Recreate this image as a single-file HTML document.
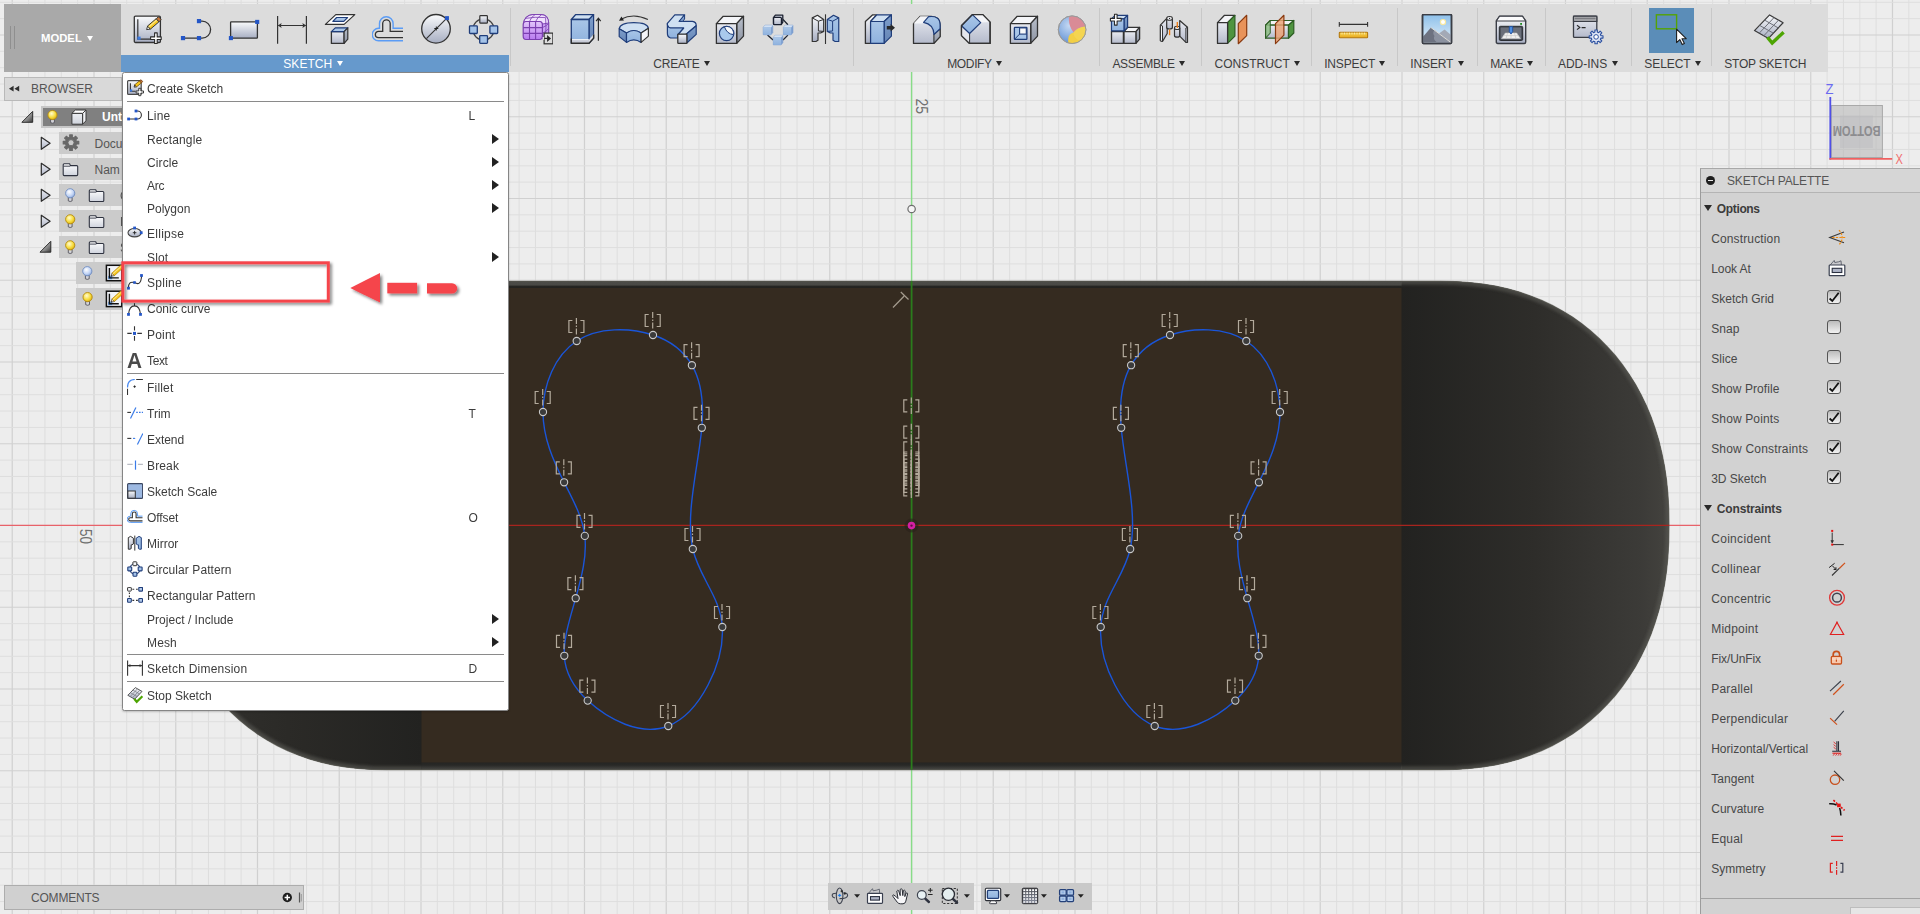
<!DOCTYPE html>
<html><head><meta charset="utf-8"><title>Fusion</title><style>
html,body{margin:0;padding:0}
body{width:1920px;height:914px;overflow:hidden;position:relative;background:#ededed;font-family:"Liberation Sans",sans-serif;font-size:12px;color:#3c3c3c}
.abs{position:absolute}
svg{display:block}
.tb{position:absolute;left:4px;top:4px;width:1824px;height:67.5px;background:#dcdcdc}
.model{position:absolute;left:0;top:0;width:117.2px;height:67.5px;background:#a9a9a9}
.model span{position:absolute;left:37px;top:28px;color:#fff;font-size:11.3px;font-weight:bold;letter-spacing:0}
.lbl{position:absolute;top:52px;height:16px;line-height:16px;font-size:12px;color:#3c3c3c;white-space:nowrap}
.lbl i{display:inline-block;width:0;height:0;border-left:3.6px solid transparent;border-right:3.6px solid transparent;border-top:5px solid #2a2a2a;margin-left:4.4px;vertical-align:1.6px}
.sep{position:absolute;top:8px;width:1px;height:58px;background:#c8c8c8}
.ico{position:absolute}
.mi{position:absolute;left:0;width:386px;height:20px}
.mi span{position:absolute;left:24px;top:1px;line-height:20px;font-size:12px;color:#3c3c3c;white-space:nowrap}
.mi b{position:absolute;font-weight:normal;top:1px;line-height:20px;font-size:12px;color:#3c3c3c}
.mi u{position:absolute;left:369px;top:5.4px;width:0;height:0;border-top:5.6px solid transparent;border-bottom:5.6px solid transparent;border-left:7px solid #222}
.mi svg{position:absolute;left:4.2px;top:2.4px}
.msep{position:absolute;left:4px;width:377px;height:1px;background:#8a8a8a}
.pl{position:absolute;left:10.2px;font-size:12px;color:#484848;line-height:16px;white-space:nowrap}
.ph{position:absolute;left:15.8px;font-size:12px;font-weight:bold;color:#3c3c3c;line-height:16px}
.cb{position:absolute;left:126.2px;width:14px;height:14px;box-sizing:border-box;border:1.2px solid #555;border-radius:3px;background:linear-gradient(#bcbcbc,#f2f2f2)}
</style></head><body>
<svg width="0" height="0" style="position:absolute"><defs>
<linearGradient id="gG" x1="0" y1="0" x2="0" y2="1"><stop offset="0" stop-color="#fafbfc"/><stop offset="1" stop-color="#a7aec2"/></linearGradient>
<linearGradient id="gG2" x1="0" y1="0" x2="0" y2="1"><stop offset="0" stop-color="#e9ebf1"/><stop offset="1" stop-color="#b4bacb"/></linearGradient>
<linearGradient id="gGs" x1="0" y1="0" x2="0" y2="1"><stop offset="0" stop-color="#b9bfca"/><stop offset="1" stop-color="#8d94a3"/></linearGradient>
<linearGradient id="gB" x1="0" y1="0" x2="0" y2="1"><stop offset="0" stop-color="#a9c6e8"/><stop offset="1" stop-color="#8fb2de"/></linearGradient>
<linearGradient id="gBs" x1="0" y1="0" x2="0" y2="1"><stop offset="0" stop-color="#7f9fcb"/><stop offset="1" stop-color="#6484b5"/></linearGradient>
<linearGradient id="gBt" x1="0" y1="0" x2="0" y2="1"><stop offset="0" stop-color="#d6e5f5"/><stop offset="1" stop-color="#c0d6ee"/></linearGradient>
<linearGradient id="gP" x1="0" y1="0" x2="0" y2="1"><stop offset="0" stop-color="#e3c6fa"/><stop offset="1" stop-color="#b87af0"/></linearGradient>
<linearGradient id="gSky" x1="0" y1="0" x2="0" y2="1"><stop offset="0" stop-color="#8dc0ea"/><stop offset="1" stop-color="#e4f0fa"/></linearGradient>
<linearGradient id="gY" x1="0" y1="0" x2="0" y2="1"><stop offset="0" stop-color="#f8d65a"/><stop offset="1" stop-color="#e8a818"/></linearGradient>
<radialGradient id="gSph" cx=".4" cy=".35" r=".7"><stop offset="0" stop-color="#c6daf4"/><stop offset="1" stop-color="#5f8fd2"/></radialGradient>
</defs></svg>
<svg width="1920" height="914" viewBox="0 0 1920 914" style="position:absolute;left:0;top:0"><defs>
<linearGradient id="gR" x1="1401" x2="1669" y1="0" y2="0" gradientUnits="userSpaceOnUse"><stop offset="0" stop-color="#222220"/><stop offset="0.5" stop-color="#2e2d2a"/><stop offset="0.9" stop-color="#3c3b38"/><stop offset="1" stop-color="#44433f"/></linearGradient>
<linearGradient id="gL" x1="422" x2="154" y1="0" y2="0" gradientUnits="userSpaceOnUse"><stop offset="0" stop-color="#222220"/><stop offset="0.5" stop-color="#2b2a27"/><stop offset="0.9" stop-color="#33322f"/><stop offset="1" stop-color="#3a3936"/></linearGradient>
<linearGradient id="gTop" x1="0" x2="0" y1="280" y2="288.2" gradientUnits="userSpaceOnUse"><stop offset="0" stop-color="#3e3e3a"/><stop offset=".2" stop-color="#4c4c48"/><stop offset=".6" stop-color="#494945"/><stop offset=".78" stop-color="#252522"/><stop offset="1" stop-color="#22221f"/></linearGradient>
<linearGradient id="gBot" x1="0" x2="0" y1="762.3" y2="770.3" gradientUnits="userSpaceOnUse"><stop offset="0" stop-color="#252523"/><stop offset=".35" stop-color="#282826"/><stop offset=".75" stop-color="#3e3e3b"/><stop offset="1" stop-color="#4e4e4a"/></linearGradient>
<clipPath id="endsclip"><rect x="100" y="270" width="321.5" height="510"/><rect x="1401" y="270" width="300" height="510"/></clipPath><filter id="rimblur" x="-5%" y="-5%" width="110%" height="110%"><feGaussianBlur stdDeviation="1.8"/></filter>
<clipPath id="bodyclip"><path d="M1440.0,281.3 L1456.0,281.6 L1469.9,282.5 L1483.0,284.0 L1495.5,286.1 L1507.7,288.8 L1519.4,292.1 L1530.7,296.0 L1541.7,300.4 L1552.3,305.4 L1562.5,311.0 L1572.4,317.1 L1581.8,323.8 L1590.8,331.0 L1599.4,338.7 L1607.5,346.9 L1615.2,355.5 L1622.4,364.7 L1629.1,374.3 L1635.4,384.3 L1641.1,394.8 L1646.4,405.7 L1651.1,417.0 L1655.2,428.7 L1658.9,440.8 L1661.9,453.4 L1664.5,466.3 L1666.5,479.7 L1667.9,493.7 L1668.7,508.4 L1669.0,525.5 L1668.7,542.6 L1667.9,557.3 L1666.5,571.3 L1664.5,584.7 L1661.9,597.6 L1658.9,610.2 L1655.2,622.3 L1651.1,634.0 L1646.4,645.3 L1641.1,656.2 L1635.4,666.7 L1629.1,676.7 L1622.4,686.3 L1615.2,695.5 L1607.5,704.1 L1599.4,712.3 L1590.8,720.0 L1581.8,727.2 L1572.4,733.9 L1562.5,740.0 L1552.3,745.6 L1541.7,750.6 L1530.7,755.0 L1519.4,758.9 L1507.7,762.2 L1495.5,764.9 L1483.0,767.0 L1469.9,768.5 L1456.0,769.4 L1440.0,769.7 L387.0,769.7 L371.4,769.4 L357.8,768.5 L345.0,767.0 L332.7,764.9 L320.8,762.2 L309.3,758.9 L298.2,755.0 L287.5,750.6 L277.1,745.6 L267.1,740.0 L257.5,733.9 L248.3,727.2 L239.5,720.0 L231.1,712.3 L223.1,704.1 L215.6,695.5 L208.6,686.3 L202.0,676.7 L195.9,666.7 L190.3,656.2 L185.1,645.3 L180.5,634.0 L176.5,622.3 L172.9,610.2 L169.9,597.6 L167.4,584.7 L165.5,571.3 L164.1,557.3 L163.3,542.6 L163.0,525.5 L163.3,508.4 L164.1,493.7 L165.5,479.7 L167.4,466.3 L169.9,453.4 L172.9,440.8 L176.5,428.7 L180.5,417.0 L185.1,405.7 L190.3,394.8 L195.9,384.3 L202.0,374.3 L208.6,364.7 L215.6,355.5 L223.1,346.9 L231.1,338.7 L239.5,331.0 L248.3,323.8 L257.5,317.1 L267.1,311.0 L277.1,305.4 L287.5,300.4 L298.2,296.0 L309.3,292.1 L320.8,288.8 L332.7,286.1 L345.0,284.0 L357.8,282.5 L371.4,281.6 L387.0,281.3Z"/></clipPath>
</defs><rect width="1920" height="914" fill="#ededed"/><line x1="12.25" y1="0" x2="12.25" y2="914" stroke="#d0d0d0" stroke-width="1.2"/>
<line x1="28.60" y1="0" x2="28.60" y2="914" stroke="#dedede" stroke-width="1"/>
<line x1="44.95" y1="0" x2="44.95" y2="914" stroke="#dedede" stroke-width="1"/>
<line x1="61.30" y1="0" x2="61.30" y2="914" stroke="#dedede" stroke-width="1"/>
<line x1="77.65" y1="0" x2="77.65" y2="914" stroke="#dedede" stroke-width="1"/>
<line x1="94.00" y1="0" x2="94.00" y2="914" stroke="#d0d0d0" stroke-width="1.2"/>
<line x1="110.35" y1="0" x2="110.35" y2="914" stroke="#dedede" stroke-width="1"/>
<line x1="126.70" y1="0" x2="126.70" y2="914" stroke="#dedede" stroke-width="1"/>
<line x1="143.05" y1="0" x2="143.05" y2="914" stroke="#dedede" stroke-width="1"/>
<line x1="159.40" y1="0" x2="159.40" y2="914" stroke="#dedede" stroke-width="1"/>
<line x1="175.75" y1="0" x2="175.75" y2="914" stroke="#d0d0d0" stroke-width="1.2"/>
<line x1="192.10" y1="0" x2="192.10" y2="914" stroke="#dedede" stroke-width="1"/>
<line x1="208.45" y1="0" x2="208.45" y2="914" stroke="#dedede" stroke-width="1"/>
<line x1="224.80" y1="0" x2="224.80" y2="914" stroke="#dedede" stroke-width="1"/>
<line x1="241.15" y1="0" x2="241.15" y2="914" stroke="#dedede" stroke-width="1"/>
<line x1="257.50" y1="0" x2="257.50" y2="914" stroke="#d0d0d0" stroke-width="1.2"/>
<line x1="273.85" y1="0" x2="273.85" y2="914" stroke="#dedede" stroke-width="1"/>
<line x1="290.20" y1="0" x2="290.20" y2="914" stroke="#dedede" stroke-width="1"/>
<line x1="306.55" y1="0" x2="306.55" y2="914" stroke="#dedede" stroke-width="1"/>
<line x1="322.90" y1="0" x2="322.90" y2="914" stroke="#dedede" stroke-width="1"/>
<line x1="339.25" y1="0" x2="339.25" y2="914" stroke="#d0d0d0" stroke-width="1.2"/>
<line x1="355.60" y1="0" x2="355.60" y2="914" stroke="#dedede" stroke-width="1"/>
<line x1="371.95" y1="0" x2="371.95" y2="914" stroke="#dedede" stroke-width="1"/>
<line x1="388.30" y1="0" x2="388.30" y2="914" stroke="#dedede" stroke-width="1"/>
<line x1="404.65" y1="0" x2="404.65" y2="914" stroke="#dedede" stroke-width="1"/>
<line x1="421.00" y1="0" x2="421.00" y2="914" stroke="#d0d0d0" stroke-width="1.2"/>
<line x1="437.35" y1="0" x2="437.35" y2="914" stroke="#dedede" stroke-width="1"/>
<line x1="453.70" y1="0" x2="453.70" y2="914" stroke="#dedede" stroke-width="1"/>
<line x1="470.05" y1="0" x2="470.05" y2="914" stroke="#dedede" stroke-width="1"/>
<line x1="486.40" y1="0" x2="486.40" y2="914" stroke="#dedede" stroke-width="1"/>
<line x1="502.75" y1="0" x2="502.75" y2="914" stroke="#d0d0d0" stroke-width="1.2"/>
<line x1="519.10" y1="0" x2="519.10" y2="914" stroke="#dedede" stroke-width="1"/>
<line x1="535.45" y1="0" x2="535.45" y2="914" stroke="#dedede" stroke-width="1"/>
<line x1="551.80" y1="0" x2="551.80" y2="914" stroke="#dedede" stroke-width="1"/>
<line x1="568.15" y1="0" x2="568.15" y2="914" stroke="#dedede" stroke-width="1"/>
<line x1="584.50" y1="0" x2="584.50" y2="914" stroke="#d0d0d0" stroke-width="1.2"/>
<line x1="600.85" y1="0" x2="600.85" y2="914" stroke="#dedede" stroke-width="1"/>
<line x1="617.20" y1="0" x2="617.20" y2="914" stroke="#dedede" stroke-width="1"/>
<line x1="633.55" y1="0" x2="633.55" y2="914" stroke="#dedede" stroke-width="1"/>
<line x1="649.90" y1="0" x2="649.90" y2="914" stroke="#dedede" stroke-width="1"/>
<line x1="666.25" y1="0" x2="666.25" y2="914" stroke="#d0d0d0" stroke-width="1.2"/>
<line x1="682.60" y1="0" x2="682.60" y2="914" stroke="#dedede" stroke-width="1"/>
<line x1="698.95" y1="0" x2="698.95" y2="914" stroke="#dedede" stroke-width="1"/>
<line x1="715.30" y1="0" x2="715.30" y2="914" stroke="#dedede" stroke-width="1"/>
<line x1="731.65" y1="0" x2="731.65" y2="914" stroke="#dedede" stroke-width="1"/>
<line x1="748.00" y1="0" x2="748.00" y2="914" stroke="#d0d0d0" stroke-width="1.2"/>
<line x1="764.35" y1="0" x2="764.35" y2="914" stroke="#dedede" stroke-width="1"/>
<line x1="780.70" y1="0" x2="780.70" y2="914" stroke="#dedede" stroke-width="1"/>
<line x1="797.05" y1="0" x2="797.05" y2="914" stroke="#dedede" stroke-width="1"/>
<line x1="813.40" y1="0" x2="813.40" y2="914" stroke="#dedede" stroke-width="1"/>
<line x1="829.75" y1="0" x2="829.75" y2="914" stroke="#d0d0d0" stroke-width="1.2"/>
<line x1="846.10" y1="0" x2="846.10" y2="914" stroke="#dedede" stroke-width="1"/>
<line x1="862.45" y1="0" x2="862.45" y2="914" stroke="#dedede" stroke-width="1"/>
<line x1="878.80" y1="0" x2="878.80" y2="914" stroke="#dedede" stroke-width="1"/>
<line x1="895.15" y1="0" x2="895.15" y2="914" stroke="#dedede" stroke-width="1"/>
<line x1="911.50" y1="0" x2="911.50" y2="914" stroke="#d0d0d0" stroke-width="1.2"/>
<line x1="927.85" y1="0" x2="927.85" y2="914" stroke="#dedede" stroke-width="1"/>
<line x1="944.20" y1="0" x2="944.20" y2="914" stroke="#dedede" stroke-width="1"/>
<line x1="960.55" y1="0" x2="960.55" y2="914" stroke="#dedede" stroke-width="1"/>
<line x1="976.90" y1="0" x2="976.90" y2="914" stroke="#dedede" stroke-width="1"/>
<line x1="993.25" y1="0" x2="993.25" y2="914" stroke="#d0d0d0" stroke-width="1.2"/>
<line x1="1009.60" y1="0" x2="1009.60" y2="914" stroke="#dedede" stroke-width="1"/>
<line x1="1025.95" y1="0" x2="1025.95" y2="914" stroke="#dedede" stroke-width="1"/>
<line x1="1042.30" y1="0" x2="1042.30" y2="914" stroke="#dedede" stroke-width="1"/>
<line x1="1058.65" y1="0" x2="1058.65" y2="914" stroke="#dedede" stroke-width="1"/>
<line x1="1075.00" y1="0" x2="1075.00" y2="914" stroke="#d0d0d0" stroke-width="1.2"/>
<line x1="1091.35" y1="0" x2="1091.35" y2="914" stroke="#dedede" stroke-width="1"/>
<line x1="1107.70" y1="0" x2="1107.70" y2="914" stroke="#dedede" stroke-width="1"/>
<line x1="1124.05" y1="0" x2="1124.05" y2="914" stroke="#dedede" stroke-width="1"/>
<line x1="1140.40" y1="0" x2="1140.40" y2="914" stroke="#dedede" stroke-width="1"/>
<line x1="1156.75" y1="0" x2="1156.75" y2="914" stroke="#d0d0d0" stroke-width="1.2"/>
<line x1="1173.10" y1="0" x2="1173.10" y2="914" stroke="#dedede" stroke-width="1"/>
<line x1="1189.45" y1="0" x2="1189.45" y2="914" stroke="#dedede" stroke-width="1"/>
<line x1="1205.80" y1="0" x2="1205.80" y2="914" stroke="#dedede" stroke-width="1"/>
<line x1="1222.15" y1="0" x2="1222.15" y2="914" stroke="#dedede" stroke-width="1"/>
<line x1="1238.50" y1="0" x2="1238.50" y2="914" stroke="#d0d0d0" stroke-width="1.2"/>
<line x1="1254.85" y1="0" x2="1254.85" y2="914" stroke="#dedede" stroke-width="1"/>
<line x1="1271.20" y1="0" x2="1271.20" y2="914" stroke="#dedede" stroke-width="1"/>
<line x1="1287.55" y1="0" x2="1287.55" y2="914" stroke="#dedede" stroke-width="1"/>
<line x1="1303.90" y1="0" x2="1303.90" y2="914" stroke="#dedede" stroke-width="1"/>
<line x1="1320.25" y1="0" x2="1320.25" y2="914" stroke="#d0d0d0" stroke-width="1.2"/>
<line x1="1336.60" y1="0" x2="1336.60" y2="914" stroke="#dedede" stroke-width="1"/>
<line x1="1352.95" y1="0" x2="1352.95" y2="914" stroke="#dedede" stroke-width="1"/>
<line x1="1369.30" y1="0" x2="1369.30" y2="914" stroke="#dedede" stroke-width="1"/>
<line x1="1385.65" y1="0" x2="1385.65" y2="914" stroke="#dedede" stroke-width="1"/>
<line x1="1402.00" y1="0" x2="1402.00" y2="914" stroke="#d0d0d0" stroke-width="1.2"/>
<line x1="1418.35" y1="0" x2="1418.35" y2="914" stroke="#dedede" stroke-width="1"/>
<line x1="1434.70" y1="0" x2="1434.70" y2="914" stroke="#dedede" stroke-width="1"/>
<line x1="1451.05" y1="0" x2="1451.05" y2="914" stroke="#dedede" stroke-width="1"/>
<line x1="1467.40" y1="0" x2="1467.40" y2="914" stroke="#dedede" stroke-width="1"/>
<line x1="1483.75" y1="0" x2="1483.75" y2="914" stroke="#d0d0d0" stroke-width="1.2"/>
<line x1="1500.10" y1="0" x2="1500.10" y2="914" stroke="#dedede" stroke-width="1"/>
<line x1="1516.45" y1="0" x2="1516.45" y2="914" stroke="#dedede" stroke-width="1"/>
<line x1="1532.80" y1="0" x2="1532.80" y2="914" stroke="#dedede" stroke-width="1"/>
<line x1="1549.15" y1="0" x2="1549.15" y2="914" stroke="#dedede" stroke-width="1"/>
<line x1="1565.50" y1="0" x2="1565.50" y2="914" stroke="#d0d0d0" stroke-width="1.2"/>
<line x1="1581.85" y1="0" x2="1581.85" y2="914" stroke="#dedede" stroke-width="1"/>
<line x1="1598.20" y1="0" x2="1598.20" y2="914" stroke="#dedede" stroke-width="1"/>
<line x1="1614.55" y1="0" x2="1614.55" y2="914" stroke="#dedede" stroke-width="1"/>
<line x1="1630.90" y1="0" x2="1630.90" y2="914" stroke="#dedede" stroke-width="1"/>
<line x1="1647.25" y1="0" x2="1647.25" y2="914" stroke="#d0d0d0" stroke-width="1.2"/>
<line x1="1663.60" y1="0" x2="1663.60" y2="914" stroke="#dedede" stroke-width="1"/>
<line x1="1679.95" y1="0" x2="1679.95" y2="914" stroke="#dedede" stroke-width="1"/>
<line x1="1696.30" y1="0" x2="1696.30" y2="914" stroke="#dedede" stroke-width="1"/>
<line x1="1712.65" y1="0" x2="1712.65" y2="914" stroke="#dedede" stroke-width="1"/>
<line x1="1729.00" y1="0" x2="1729.00" y2="914" stroke="#d0d0d0" stroke-width="1.2"/>
<line x1="1745.35" y1="0" x2="1745.35" y2="914" stroke="#dedede" stroke-width="1"/>
<line x1="1761.70" y1="0" x2="1761.70" y2="914" stroke="#dedede" stroke-width="1"/>
<line x1="1778.05" y1="0" x2="1778.05" y2="914" stroke="#dedede" stroke-width="1"/>
<line x1="1794.40" y1="0" x2="1794.40" y2="914" stroke="#dedede" stroke-width="1"/>
<line x1="1810.75" y1="0" x2="1810.75" y2="914" stroke="#d0d0d0" stroke-width="1.2"/>
<line x1="1827.10" y1="0" x2="1827.10" y2="914" stroke="#dedede" stroke-width="1"/>
<line x1="1843.45" y1="0" x2="1843.45" y2="914" stroke="#dedede" stroke-width="1"/>
<line x1="1859.80" y1="0" x2="1859.80" y2="914" stroke="#dedede" stroke-width="1"/>
<line x1="1876.15" y1="0" x2="1876.15" y2="914" stroke="#dedede" stroke-width="1"/>
<line x1="1892.50" y1="0" x2="1892.50" y2="914" stroke="#d0d0d0" stroke-width="1.2"/>
<line x1="1908.85" y1="0" x2="1908.85" y2="914" stroke="#dedede" stroke-width="1"/>
<line x1="0" y1="2.30" x2="1920" y2="2.30" stroke="#dedede" stroke-width="1"/>
<line x1="0" y1="18.65" x2="1920" y2="18.65" stroke="#dedede" stroke-width="1"/>
<line x1="0" y1="35.00" x2="1920" y2="35.00" stroke="#d0d0d0" stroke-width="1.2"/>
<line x1="0" y1="51.35" x2="1920" y2="51.35" stroke="#dedede" stroke-width="1"/>
<line x1="0" y1="67.70" x2="1920" y2="67.70" stroke="#dedede" stroke-width="1"/>
<line x1="0" y1="84.05" x2="1920" y2="84.05" stroke="#dedede" stroke-width="1"/>
<line x1="0" y1="100.40" x2="1920" y2="100.40" stroke="#dedede" stroke-width="1"/>
<line x1="0" y1="116.75" x2="1920" y2="116.75" stroke="#d0d0d0" stroke-width="1.2"/>
<line x1="0" y1="133.10" x2="1920" y2="133.10" stroke="#dedede" stroke-width="1"/>
<line x1="0" y1="149.45" x2="1920" y2="149.45" stroke="#dedede" stroke-width="1"/>
<line x1="0" y1="165.80" x2="1920" y2="165.80" stroke="#dedede" stroke-width="1"/>
<line x1="0" y1="182.15" x2="1920" y2="182.15" stroke="#dedede" stroke-width="1"/>
<line x1="0" y1="198.50" x2="1920" y2="198.50" stroke="#d0d0d0" stroke-width="1.2"/>
<line x1="0" y1="214.85" x2="1920" y2="214.85" stroke="#dedede" stroke-width="1"/>
<line x1="0" y1="231.20" x2="1920" y2="231.20" stroke="#dedede" stroke-width="1"/>
<line x1="0" y1="247.55" x2="1920" y2="247.55" stroke="#dedede" stroke-width="1"/>
<line x1="0" y1="263.90" x2="1920" y2="263.90" stroke="#dedede" stroke-width="1"/>
<line x1="0" y1="280.25" x2="1920" y2="280.25" stroke="#d0d0d0" stroke-width="1.2"/>
<line x1="0" y1="296.60" x2="1920" y2="296.60" stroke="#dedede" stroke-width="1"/>
<line x1="0" y1="312.95" x2="1920" y2="312.95" stroke="#dedede" stroke-width="1"/>
<line x1="0" y1="329.30" x2="1920" y2="329.30" stroke="#dedede" stroke-width="1"/>
<line x1="0" y1="345.65" x2="1920" y2="345.65" stroke="#dedede" stroke-width="1"/>
<line x1="0" y1="362.00" x2="1920" y2="362.00" stroke="#d0d0d0" stroke-width="1.2"/>
<line x1="0" y1="378.35" x2="1920" y2="378.35" stroke="#dedede" stroke-width="1"/>
<line x1="0" y1="394.70" x2="1920" y2="394.70" stroke="#dedede" stroke-width="1"/>
<line x1="0" y1="411.05" x2="1920" y2="411.05" stroke="#dedede" stroke-width="1"/>
<line x1="0" y1="427.40" x2="1920" y2="427.40" stroke="#dedede" stroke-width="1"/>
<line x1="0" y1="443.75" x2="1920" y2="443.75" stroke="#d0d0d0" stroke-width="1.2"/>
<line x1="0" y1="460.10" x2="1920" y2="460.10" stroke="#dedede" stroke-width="1"/>
<line x1="0" y1="476.45" x2="1920" y2="476.45" stroke="#dedede" stroke-width="1"/>
<line x1="0" y1="492.80" x2="1920" y2="492.80" stroke="#dedede" stroke-width="1"/>
<line x1="0" y1="509.15" x2="1920" y2="509.15" stroke="#dedede" stroke-width="1"/>
<line x1="0" y1="525.50" x2="1920" y2="525.50" stroke="#d0d0d0" stroke-width="1.2"/>
<line x1="0" y1="541.85" x2="1920" y2="541.85" stroke="#dedede" stroke-width="1"/>
<line x1="0" y1="558.20" x2="1920" y2="558.20" stroke="#dedede" stroke-width="1"/>
<line x1="0" y1="574.55" x2="1920" y2="574.55" stroke="#dedede" stroke-width="1"/>
<line x1="0" y1="590.90" x2="1920" y2="590.90" stroke="#dedede" stroke-width="1"/>
<line x1="0" y1="607.25" x2="1920" y2="607.25" stroke="#d0d0d0" stroke-width="1.2"/>
<line x1="0" y1="623.60" x2="1920" y2="623.60" stroke="#dedede" stroke-width="1"/>
<line x1="0" y1="639.95" x2="1920" y2="639.95" stroke="#dedede" stroke-width="1"/>
<line x1="0" y1="656.30" x2="1920" y2="656.30" stroke="#dedede" stroke-width="1"/>
<line x1="0" y1="672.65" x2="1920" y2="672.65" stroke="#dedede" stroke-width="1"/>
<line x1="0" y1="689.00" x2="1920" y2="689.00" stroke="#d0d0d0" stroke-width="1.2"/>
<line x1="0" y1="705.35" x2="1920" y2="705.35" stroke="#dedede" stroke-width="1"/>
<line x1="0" y1="721.70" x2="1920" y2="721.70" stroke="#dedede" stroke-width="1"/>
<line x1="0" y1="738.05" x2="1920" y2="738.05" stroke="#dedede" stroke-width="1"/>
<line x1="0" y1="754.40" x2="1920" y2="754.40" stroke="#dedede" stroke-width="1"/>
<line x1="0" y1="770.75" x2="1920" y2="770.75" stroke="#d0d0d0" stroke-width="1.2"/>
<line x1="0" y1="787.10" x2="1920" y2="787.10" stroke="#dedede" stroke-width="1"/>
<line x1="0" y1="803.45" x2="1920" y2="803.45" stroke="#dedede" stroke-width="1"/>
<line x1="0" y1="819.80" x2="1920" y2="819.80" stroke="#dedede" stroke-width="1"/>
<line x1="0" y1="836.15" x2="1920" y2="836.15" stroke="#dedede" stroke-width="1"/>
<line x1="0" y1="852.50" x2="1920" y2="852.50" stroke="#d0d0d0" stroke-width="1.2"/>
<line x1="0" y1="868.85" x2="1920" y2="868.85" stroke="#dedede" stroke-width="1"/>
<line x1="0" y1="885.20" x2="1920" y2="885.20" stroke="#dedede" stroke-width="1"/>
<line x1="0" y1="901.55" x2="1920" y2="901.55" stroke="#dedede" stroke-width="1"/><line x1="911.6" y1="0" x2="911.6" y2="914" stroke="#88dc88" stroke-width="1.4"/><line x1="0" y1="525.4" x2="1920" y2="525.4" stroke="#e8626a" stroke-width="1.25"/><circle cx="911.6" cy="209" r="3.7" fill="#f6f6f6" stroke="#6e6e6e" stroke-width="1.2"/><path d="M1440.0,281.3 L1456.0,281.6 L1469.9,282.5 L1483.0,284.0 L1495.5,286.1 L1507.7,288.8 L1519.4,292.1 L1530.7,296.0 L1541.7,300.4 L1552.3,305.4 L1562.5,311.0 L1572.4,317.1 L1581.8,323.8 L1590.8,331.0 L1599.4,338.7 L1607.5,346.9 L1615.2,355.5 L1622.4,364.7 L1629.1,374.3 L1635.4,384.3 L1641.1,394.8 L1646.4,405.7 L1651.1,417.0 L1655.2,428.7 L1658.9,440.8 L1661.9,453.4 L1664.5,466.3 L1666.5,479.7 L1667.9,493.7 L1668.7,508.4 L1669.0,525.5 L1668.7,542.6 L1667.9,557.3 L1666.5,571.3 L1664.5,584.7 L1661.9,597.6 L1658.9,610.2 L1655.2,622.3 L1651.1,634.0 L1646.4,645.3 L1641.1,656.2 L1635.4,666.7 L1629.1,676.7 L1622.4,686.3 L1615.2,695.5 L1607.5,704.1 L1599.4,712.3 L1590.8,720.0 L1581.8,727.2 L1572.4,733.9 L1562.5,740.0 L1552.3,745.6 L1541.7,750.6 L1530.7,755.0 L1519.4,758.9 L1507.7,762.2 L1495.5,764.9 L1483.0,767.0 L1469.9,768.5 L1456.0,769.4 L1440.0,769.7 L387.0,769.7 L371.4,769.4 L357.8,768.5 L345.0,767.0 L332.7,764.9 L320.8,762.2 L309.3,758.9 L298.2,755.0 L287.5,750.6 L277.1,745.6 L267.1,740.0 L257.5,733.9 L248.3,727.2 L239.5,720.0 L231.1,712.3 L223.1,704.1 L215.6,695.5 L208.6,686.3 L202.0,676.7 L195.9,666.7 L190.3,656.2 L185.1,645.3 L180.5,634.0 L176.5,622.3 L172.9,610.2 L169.9,597.6 L167.4,584.7 L165.5,571.3 L164.1,557.3 L163.3,542.6 L163.0,525.5 L163.3,508.4 L164.1,493.7 L165.5,479.7 L167.4,466.3 L169.9,453.4 L172.9,440.8 L176.5,428.7 L180.5,417.0 L185.1,405.7 L190.3,394.8 L195.9,384.3 L202.0,374.3 L208.6,364.7 L215.6,355.5 L223.1,346.9 L231.1,338.7 L239.5,331.0 L248.3,323.8 L257.5,317.1 L267.1,311.0 L277.1,305.4 L287.5,300.4 L298.2,296.0 L309.3,292.1 L320.8,288.8 L332.7,286.1 L345.0,284.0 L357.8,282.5 L371.4,281.6 L387.0,281.3Z" fill="#4a4a46"/><g clip-path="url(#bodyclip)"><rect x="1401" y="270" width="280" height="520" fill="url(#gR)"/><rect x="140" y="270" width="282" height="520" fill="url(#gL)"/><rect x="421.5" y="281" width="980" height="489" fill="#22221f"/><rect x="421.5" y="280" width="980" height="8.2" fill="url(#gTop)"/><rect x="421.5" y="762.3" width="980" height="8" fill="url(#gBot)"/><rect x="421.5" y="288" width="980" height="474.5" fill="#352b20"/></g><g clip-path="url(#bodyclip)"><g clip-path="url(#endsclip)"><path d="M1440.0,281.3 L1456.0,281.6 L1469.9,282.5 L1483.0,284.0 L1495.5,286.1 L1507.7,288.8 L1519.4,292.1 L1530.7,296.0 L1541.7,300.4 L1552.3,305.4 L1562.5,311.0 L1572.4,317.1 L1581.8,323.8 L1590.8,331.0 L1599.4,338.7 L1607.5,346.9 L1615.2,355.5 L1622.4,364.7 L1629.1,374.3 L1635.4,384.3 L1641.1,394.8 L1646.4,405.7 L1651.1,417.0 L1655.2,428.7 L1658.9,440.8 L1661.9,453.4 L1664.5,466.3 L1666.5,479.7 L1667.9,493.7 L1668.7,508.4 L1669.0,525.5 L1668.7,542.6 L1667.9,557.3 L1666.5,571.3 L1664.5,584.7 L1661.9,597.6 L1658.9,610.2 L1655.2,622.3 L1651.1,634.0 L1646.4,645.3 L1641.1,656.2 L1635.4,666.7 L1629.1,676.7 L1622.4,686.3 L1615.2,695.5 L1607.5,704.1 L1599.4,712.3 L1590.8,720.0 L1581.8,727.2 L1572.4,733.9 L1562.5,740.0 L1552.3,745.6 L1541.7,750.6 L1530.7,755.0 L1519.4,758.9 L1507.7,762.2 L1495.5,764.9 L1483.0,767.0 L1469.9,768.5 L1456.0,769.4 L1440.0,769.7 L387.0,769.7 L371.4,769.4 L357.8,768.5 L345.0,767.0 L332.7,764.9 L320.8,762.2 L309.3,758.9 L298.2,755.0 L287.5,750.6 L277.1,745.6 L267.1,740.0 L257.5,733.9 L248.3,727.2 L239.5,720.0 L231.1,712.3 L223.1,704.1 L215.6,695.5 L208.6,686.3 L202.0,676.7 L195.9,666.7 L190.3,656.2 L185.1,645.3 L180.5,634.0 L176.5,622.3 L172.9,610.2 L169.9,597.6 L167.4,584.7 L165.5,571.3 L164.1,557.3 L163.3,542.6 L163.0,525.5 L163.3,508.4 L164.1,493.7 L165.5,479.7 L167.4,466.3 L169.9,453.4 L172.9,440.8 L176.5,428.7 L180.5,417.0 L185.1,405.7 L190.3,394.8 L195.9,384.3 L202.0,374.3 L208.6,364.7 L215.6,355.5 L223.1,346.9 L231.1,338.7 L239.5,331.0 L248.3,323.8 L257.5,317.1 L267.1,311.0 L277.1,305.4 L287.5,300.4 L298.2,296.0 L309.3,292.1 L320.8,288.8 L332.7,286.1 L345.0,284.0 L357.8,282.5 L371.4,281.6 L387.0,281.3Z" fill="none" stroke="#5a5a55" stroke-width="7" opacity=".6" filter="url(#rimblur)"/></g></g><path d="M1440.0,281.3 L1456.0,281.6 L1469.9,282.5 L1483.0,284.0 L1495.5,286.1 L1507.7,288.8 L1519.4,292.1 L1530.7,296.0 L1541.7,300.4 L1552.3,305.4 L1562.5,311.0 L1572.4,317.1 L1581.8,323.8 L1590.8,331.0 L1599.4,338.7 L1607.5,346.9 L1615.2,355.5 L1622.4,364.7 L1629.1,374.3 L1635.4,384.3 L1641.1,394.8 L1646.4,405.7 L1651.1,417.0 L1655.2,428.7 L1658.9,440.8 L1661.9,453.4 L1664.5,466.3 L1666.5,479.7 L1667.9,493.7 L1668.7,508.4 L1669.0,525.5 L1668.7,542.6 L1667.9,557.3 L1666.5,571.3 L1664.5,584.7 L1661.9,597.6 L1658.9,610.2 L1655.2,622.3 L1651.1,634.0 L1646.4,645.3 L1641.1,656.2 L1635.4,666.7 L1629.1,676.7 L1622.4,686.3 L1615.2,695.5 L1607.5,704.1 L1599.4,712.3 L1590.8,720.0 L1581.8,727.2 L1572.4,733.9 L1562.5,740.0 L1552.3,745.6 L1541.7,750.6 L1530.7,755.0 L1519.4,758.9 L1507.7,762.2 L1495.5,764.9 L1483.0,767.0 L1469.9,768.5 L1456.0,769.4 L1440.0,769.7 L387.0,769.7 L371.4,769.4 L357.8,768.5 L345.0,767.0 L332.7,764.9 L320.8,762.2 L309.3,758.9 L298.2,755.0 L287.5,750.6 L277.1,745.6 L267.1,740.0 L257.5,733.9 L248.3,727.2 L239.5,720.0 L231.1,712.3 L223.1,704.1 L215.6,695.5 L208.6,686.3 L202.0,676.7 L195.9,666.7 L190.3,656.2 L185.1,645.3 L180.5,634.0 L176.5,622.3 L172.9,610.2 L169.9,597.6 L167.4,584.7 L165.5,571.3 L164.1,557.3 L163.3,542.6 L163.0,525.5 L163.3,508.4 L164.1,493.7 L165.5,479.7 L167.4,466.3 L169.9,453.4 L172.9,440.8 L176.5,428.7 L180.5,417.0 L185.1,405.7 L190.3,394.8 L195.9,384.3 L202.0,374.3 L208.6,364.7 L215.6,355.5 L223.1,346.9 L231.1,338.7 L239.5,331.0 L248.3,323.8 L257.5,317.1 L267.1,311.0 L277.1,305.4 L287.5,300.4 L298.2,296.0 L309.3,292.1 L320.8,288.8 L332.7,286.1 L345.0,284.0 L357.8,282.5 L371.4,281.6 L387.0,281.3Z" fill="none" stroke="#55554f" stroke-width="1.2" opacity=".7"/><g clip-path="url(#bodyclip)"><line x1="911.6" y1="270" x2="911.6" y2="780" stroke="#2a7c1c" stroke-width="1.8"/><line x1="140" y1="525.4" x2="1680" y2="525.4" stroke="#a8241e" stroke-width="1.1"/></g><g stroke="#a59c8f" stroke-width="1.2" fill="none"><path d="M893,307.5 L904.2,296"/><path d="M900.8,292 L908.5,299.5"/></g><path d="M543.0,412.0 C543.1,385.1 554.7,355.4 576.7,341.0 C598.4,326.8 630.2,327.5 653.0,335.0 C671.3,341.0 683.9,351.4 691.9,365.2 C701.0,380.9 704.1,401.1 701.8,427.8 C698.6,464.8 685.0,514.2 692.8,549.0 C699.3,577.8 720.5,596.6 722.3,627.0 C724.4,662.4 700.1,713.4 668.3,726.0 C640.7,736.9 607.5,718.9 587.7,700.6 C572.4,686.4 565.2,672.1 564.3,655.8 C563.4,638.3 569.9,618.6 575.7,598.2 C581.7,577.1 587.1,555.4 584.8,535.9 C582.6,517.3 573.4,500.8 564.1,482.3 C553.6,461.4 542.9,438.0 543.0,412.0Z" fill="none" stroke="#1a55d8" stroke-width="1.4"/><path d="M1280.0,412.0 C1279.9,385.1 1268.3,355.4 1246.3,341.0 C1224.6,326.8 1192.8,327.5 1170.0,335.0 C1151.7,341.0 1139.1,351.4 1131.1,365.2 C1122.0,380.9 1118.9,401.1 1121.2,427.8 C1124.4,464.8 1138.0,514.2 1130.2,549.0 C1123.7,577.8 1102.5,596.6 1100.7,627.0 C1098.6,662.4 1122.9,713.4 1154.7,726.0 C1182.3,736.9 1215.5,718.9 1235.3,700.6 C1250.6,686.4 1257.8,672.1 1258.7,655.8 C1259.6,638.3 1253.1,618.6 1247.3,598.2 C1241.3,577.1 1235.9,555.4 1238.2,535.9 C1240.4,517.3 1249.6,500.8 1258.9,482.3 C1269.4,461.4 1280.1,438.0 1280.0,412.0Z" fill="none" stroke="#1a55d8" stroke-width="1.4"/><g fill="none" stroke="#b3aa9c" stroke-width="1.2"><path d="M538.7,391.5 H535.2 V403.5 H538.7"/><path d="M546.7,391.5 H550.2 V403.5 H546.7"/><path d="M542.7,389.0 V406.0" stroke-dasharray="6 1.5 1.5 1.5"/></g><circle cx="543.0" cy="412.0" r="3.6" fill="#3b3b3b" stroke="#c9c9c9" stroke-width="1.1"/><g fill="none" stroke="#b3aa9c" stroke-width="1.2"><path d="M572.4,320.5 H568.9 V332.5 H572.4"/><path d="M580.4,320.5 H583.9 V332.5 H580.4"/><path d="M576.4,318.0 V335.0" stroke-dasharray="6 1.5 1.5 1.5"/></g><circle cx="576.7" cy="341.0" r="3.6" fill="#3b3b3b" stroke="#c9c9c9" stroke-width="1.1"/><g fill="none" stroke="#b3aa9c" stroke-width="1.2"><path d="M648.7,314.5 H645.2 V326.5 H648.7"/><path d="M656.7,314.5 H660.2 V326.5 H656.7"/><path d="M652.7,312.0 V329.0" stroke-dasharray="6 1.5 1.5 1.5"/></g><circle cx="653.0" cy="335.0" r="3.6" fill="#3b3b3b" stroke="#c9c9c9" stroke-width="1.1"/><g fill="none" stroke="#b3aa9c" stroke-width="1.2"><path d="M687.6,344.7 H684.1 V356.7 H687.6"/><path d="M695.6,344.7 H699.1 V356.7 H695.6"/><path d="M691.6,342.2 V359.2" stroke-dasharray="6 1.5 1.5 1.5"/></g><circle cx="691.9" cy="365.2" r="3.6" fill="#3b3b3b" stroke="#c9c9c9" stroke-width="1.1"/><g fill="none" stroke="#b3aa9c" stroke-width="1.2"><path d="M697.5,407.3 H694.0 V419.3 H697.5"/><path d="M705.5,407.3 H709.0 V419.3 H705.5"/><path d="M701.5,404.8 V421.8" stroke-dasharray="6 1.5 1.5 1.5"/></g><circle cx="701.8" cy="427.8" r="3.6" fill="#3b3b3b" stroke="#c9c9c9" stroke-width="1.1"/><g fill="none" stroke="#b3aa9c" stroke-width="1.2"><path d="M688.5,528.5 H685.0 V540.5 H688.5"/><path d="M696.5,528.5 H700.0 V540.5 H696.5"/><path d="M692.5,526.0 V543.0" stroke-dasharray="6 1.5 1.5 1.5"/></g><circle cx="692.8" cy="549.0" r="3.6" fill="#3b3b3b" stroke="#c9c9c9" stroke-width="1.1"/><g fill="none" stroke="#b3aa9c" stroke-width="1.2"><path d="M718.0,606.5 H714.5 V618.5 H718.0"/><path d="M726.0,606.5 H729.5 V618.5 H726.0"/><path d="M722.0,604.0 V621.0" stroke-dasharray="6 1.5 1.5 1.5"/></g><circle cx="722.3" cy="627.0" r="3.6" fill="#3b3b3b" stroke="#c9c9c9" stroke-width="1.1"/><g fill="none" stroke="#b3aa9c" stroke-width="1.2"><path d="M664.0,705.5 H660.5 V717.5 H664.0"/><path d="M672.0,705.5 H675.5 V717.5 H672.0"/><path d="M668.0,703.0 V720.0" stroke-dasharray="6 1.5 1.5 1.5"/></g><circle cx="668.3" cy="726.0" r="3.6" fill="#3b3b3b" stroke="#c9c9c9" stroke-width="1.1"/><g fill="none" stroke="#b3aa9c" stroke-width="1.2"><path d="M583.4,680.1 H579.9 V692.1 H583.4"/><path d="M591.4,680.1 H594.9 V692.1 H591.4"/><path d="M587.4,677.6 V694.6" stroke-dasharray="6 1.5 1.5 1.5"/></g><circle cx="587.7" cy="700.6" r="3.6" fill="#3b3b3b" stroke="#c9c9c9" stroke-width="1.1"/><g fill="none" stroke="#b3aa9c" stroke-width="1.2"><path d="M560.0,635.3 H556.5 V647.3 H560.0"/><path d="M568.0,635.3 H571.5 V647.3 H568.0"/><path d="M564.0,632.8 V649.8" stroke-dasharray="6 1.5 1.5 1.5"/></g><circle cx="564.3" cy="655.8" r="3.6" fill="#3b3b3b" stroke="#c9c9c9" stroke-width="1.1"/><g fill="none" stroke="#b3aa9c" stroke-width="1.2"><path d="M571.4,577.7 H567.9 V589.7 H571.4"/><path d="M579.4,577.7 H582.9 V589.7 H579.4"/><path d="M575.4,575.2 V592.2" stroke-dasharray="6 1.5 1.5 1.5"/></g><circle cx="575.7" cy="598.2" r="3.6" fill="#3b3b3b" stroke="#c9c9c9" stroke-width="1.1"/><g fill="none" stroke="#b3aa9c" stroke-width="1.2"><path d="M580.5,515.4 H577.0 V527.4 H580.5"/><path d="M588.5,515.4 H592.0 V527.4 H588.5"/><path d="M584.5,512.9 V529.9" stroke-dasharray="6 1.5 1.5 1.5"/></g><circle cx="584.8" cy="535.9" r="3.6" fill="#3b3b3b" stroke="#c9c9c9" stroke-width="1.1"/><g fill="none" stroke="#b3aa9c" stroke-width="1.2"><path d="M559.8,461.8 H556.3 V473.8 H559.8"/><path d="M567.8,461.8 H571.3 V473.8 H567.8"/><path d="M563.8,459.3 V476.3" stroke-dasharray="6 1.5 1.5 1.5"/></g><circle cx="564.1" cy="482.3" r="3.6" fill="#3b3b3b" stroke="#c9c9c9" stroke-width="1.1"/><g fill="none" stroke="#b3aa9c" stroke-width="1.2"><path d="M1275.7,391.5 H1272.2 V403.5 H1275.7"/><path d="M1283.7,391.5 H1287.2 V403.5 H1283.7"/><path d="M1279.7,389.0 V406.0" stroke-dasharray="6 1.5 1.5 1.5"/></g><circle cx="1280.0" cy="412.0" r="3.6" fill="#3b3b3b" stroke="#c9c9c9" stroke-width="1.1"/><g fill="none" stroke="#b3aa9c" stroke-width="1.2"><path d="M1242.0,320.5 H1238.5 V332.5 H1242.0"/><path d="M1250.0,320.5 H1253.5 V332.5 H1250.0"/><path d="M1246.0,318.0 V335.0" stroke-dasharray="6 1.5 1.5 1.5"/></g><circle cx="1246.3" cy="341.0" r="3.6" fill="#3b3b3b" stroke="#c9c9c9" stroke-width="1.1"/><g fill="none" stroke="#b3aa9c" stroke-width="1.2"><path d="M1165.7,314.5 H1162.2 V326.5 H1165.7"/><path d="M1173.7,314.5 H1177.2 V326.5 H1173.7"/><path d="M1169.7,312.0 V329.0" stroke-dasharray="6 1.5 1.5 1.5"/></g><circle cx="1170.0" cy="335.0" r="3.6" fill="#3b3b3b" stroke="#c9c9c9" stroke-width="1.1"/><g fill="none" stroke="#b3aa9c" stroke-width="1.2"><path d="M1126.8,344.7 H1123.3 V356.7 H1126.8"/><path d="M1134.8,344.7 H1138.3 V356.7 H1134.8"/><path d="M1130.8,342.2 V359.2" stroke-dasharray="6 1.5 1.5 1.5"/></g><circle cx="1131.1" cy="365.2" r="3.6" fill="#3b3b3b" stroke="#c9c9c9" stroke-width="1.1"/><g fill="none" stroke="#b3aa9c" stroke-width="1.2"><path d="M1116.9,407.3 H1113.4 V419.3 H1116.9"/><path d="M1124.9,407.3 H1128.4 V419.3 H1124.9"/><path d="M1120.9,404.8 V421.8" stroke-dasharray="6 1.5 1.5 1.5"/></g><circle cx="1121.2" cy="427.8" r="3.6" fill="#3b3b3b" stroke="#c9c9c9" stroke-width="1.1"/><g fill="none" stroke="#b3aa9c" stroke-width="1.2"><path d="M1125.9,528.5 H1122.4 V540.5 H1125.9"/><path d="M1133.9,528.5 H1137.4 V540.5 H1133.9"/><path d="M1129.9,526.0 V543.0" stroke-dasharray="6 1.5 1.5 1.5"/></g><circle cx="1130.2" cy="549.0" r="3.6" fill="#3b3b3b" stroke="#c9c9c9" stroke-width="1.1"/><g fill="none" stroke="#b3aa9c" stroke-width="1.2"><path d="M1096.4,606.5 H1092.9 V618.5 H1096.4"/><path d="M1104.4,606.5 H1107.9 V618.5 H1104.4"/><path d="M1100.4,604.0 V621.0" stroke-dasharray="6 1.5 1.5 1.5"/></g><circle cx="1100.7" cy="627.0" r="3.6" fill="#3b3b3b" stroke="#c9c9c9" stroke-width="1.1"/><g fill="none" stroke="#b3aa9c" stroke-width="1.2"><path d="M1150.4,705.5 H1146.9 V717.5 H1150.4"/><path d="M1158.4,705.5 H1161.9 V717.5 H1158.4"/><path d="M1154.4,703.0 V720.0" stroke-dasharray="6 1.5 1.5 1.5"/></g><circle cx="1154.7" cy="726.0" r="3.6" fill="#3b3b3b" stroke="#c9c9c9" stroke-width="1.1"/><g fill="none" stroke="#b3aa9c" stroke-width="1.2"><path d="M1231.0,680.1 H1227.5 V692.1 H1231.0"/><path d="M1239.0,680.1 H1242.5 V692.1 H1239.0"/><path d="M1235.0,677.6 V694.6" stroke-dasharray="6 1.5 1.5 1.5"/></g><circle cx="1235.3" cy="700.6" r="3.6" fill="#3b3b3b" stroke="#c9c9c9" stroke-width="1.1"/><g fill="none" stroke="#b3aa9c" stroke-width="1.2"><path d="M1254.4,635.3 H1250.9 V647.3 H1254.4"/><path d="M1262.4,635.3 H1265.9 V647.3 H1262.4"/><path d="M1258.4,632.8 V649.8" stroke-dasharray="6 1.5 1.5 1.5"/></g><circle cx="1258.7" cy="655.8" r="3.6" fill="#3b3b3b" stroke="#c9c9c9" stroke-width="1.1"/><g fill="none" stroke="#b3aa9c" stroke-width="1.2"><path d="M1243.0,577.7 H1239.5 V589.7 H1243.0"/><path d="M1251.0,577.7 H1254.5 V589.7 H1251.0"/><path d="M1247.0,575.2 V592.2" stroke-dasharray="6 1.5 1.5 1.5"/></g><circle cx="1247.3" cy="598.2" r="3.6" fill="#3b3b3b" stroke="#c9c9c9" stroke-width="1.1"/><g fill="none" stroke="#b3aa9c" stroke-width="1.2"><path d="M1233.9,515.4 H1230.4 V527.4 H1233.9"/><path d="M1241.9,515.4 H1245.4 V527.4 H1241.9"/><path d="M1237.9,512.9 V529.9" stroke-dasharray="6 1.5 1.5 1.5"/></g><circle cx="1238.2" cy="535.9" r="3.6" fill="#3b3b3b" stroke="#c9c9c9" stroke-width="1.1"/><g fill="none" stroke="#b3aa9c" stroke-width="1.2"><path d="M1254.6,461.8 H1251.1 V473.8 H1254.6"/><path d="M1262.6,461.8 H1266.1 V473.8 H1262.6"/><path d="M1258.6,459.3 V476.3" stroke-dasharray="6 1.5 1.5 1.5"/></g><circle cx="1258.9" cy="482.3" r="3.6" fill="#3b3b3b" stroke="#c9c9c9" stroke-width="1.1"/><g fill="none" stroke="#b3aa9c" stroke-width="1.2"><path d="M907.3,399.9 H903.8 V411.9 H907.3"/><path d="M915.3,399.9 H918.8 V411.9 H915.3"/><path d="M911.3,397.4 V414.4" stroke-dasharray="6 1.5 1.5 1.5"/></g><g fill="none" stroke="#b3aa9c" stroke-width="1.2"><path d="M907.3,426.2 H903.8 V438.2 H907.3"/><path d="M915.3,426.2 H918.8 V438.2 H915.3"/><path d="M911.3,423.7 V440.7" stroke-dasharray="6 1.5 1.5 1.5"/></g><g fill="none" stroke="#b3aa9c" stroke-width="1.2"><path d="M907.3,441.8 H903.8 V453.8 H907.3"/><path d="M915.3,441.8 H918.8 V453.8 H915.3"/><path d="M911.3,439.3 V456.3" stroke-dasharray="6 1.5 1.5 1.5"/></g><g fill="none" stroke="#b3aa9c" stroke-width="1.2"><path d="M907.3,452.0 H903.8 V464.0 H907.3"/><path d="M915.3,452.0 H918.8 V464.0 H915.3"/><path d="M911.3,449.5 V466.5" stroke-dasharray="6 1.5 1.5 1.5"/></g><g fill="none" stroke="#b3aa9c" stroke-width="1.2"><path d="M907.3,455.6 H903.8 V467.6 H907.3"/><path d="M915.3,455.6 H918.8 V467.6 H915.3"/><path d="M911.3,453.1 V470.1" stroke-dasharray="6 1.5 1.5 1.5"/></g><g fill="none" stroke="#b3aa9c" stroke-width="1.2"><path d="M907.3,459.1 H903.8 V471.1 H907.3"/><path d="M915.3,459.1 H918.8 V471.1 H915.3"/><path d="M911.3,456.6 V473.6" stroke-dasharray="6 1.5 1.5 1.5"/></g><g fill="none" stroke="#b3aa9c" stroke-width="1.2"><path d="M907.3,462.6 H903.8 V474.6 H907.3"/><path d="M915.3,462.6 H918.8 V474.6 H915.3"/><path d="M911.3,460.1 V477.1" stroke-dasharray="6 1.5 1.5 1.5"/></g><g fill="none" stroke="#b3aa9c" stroke-width="1.2"><path d="M907.3,466.2 H903.8 V478.2 H907.3"/><path d="M915.3,466.2 H918.8 V478.2 H915.3"/><path d="M911.3,463.7 V480.7" stroke-dasharray="6 1.5 1.5 1.5"/></g><g fill="none" stroke="#b3aa9c" stroke-width="1.2"><path d="M907.3,469.8 H903.8 V481.8 H907.3"/><path d="M915.3,469.8 H918.8 V481.8 H915.3"/><path d="M911.3,467.2 V484.2" stroke-dasharray="6 1.5 1.5 1.5"/></g><g fill="none" stroke="#b3aa9c" stroke-width="1.2"><path d="M907.3,473.3 H903.8 V485.3 H907.3"/><path d="M915.3,473.3 H918.8 V485.3 H915.3"/><path d="M911.3,470.8 V487.8" stroke-dasharray="6 1.5 1.5 1.5"/></g><g fill="none" stroke="#b3aa9c" stroke-width="1.2"><path d="M907.3,476.9 H903.8 V488.9 H907.3"/><path d="M915.3,476.9 H918.8 V488.9 H915.3"/><path d="M911.3,474.4 V491.4" stroke-dasharray="6 1.5 1.5 1.5"/></g><g fill="none" stroke="#b3aa9c" stroke-width="1.2"><path d="M907.3,480.4 H903.8 V492.4 H907.3"/><path d="M915.3,480.4 H918.8 V492.4 H915.3"/><path d="M911.3,477.9 V494.9" stroke-dasharray="6 1.5 1.5 1.5"/></g><g fill="none" stroke="#b3aa9c" stroke-width="1.2"><path d="M907.3,483.9 H903.8 V495.9 H907.3"/><path d="M915.3,483.9 H918.8 V495.9 H915.3"/><path d="M911.3,481.4 V498.4" stroke-dasharray="6 1.5 1.5 1.5"/></g><circle cx="911.5" cy="525.6" r="7" fill="#2a211a" opacity=".6"/><circle cx="911.5" cy="525.6" r="2.5" fill="#5a1040" stroke="#d41fa4" stroke-width="2.6"/><text transform="translate(915.9,98.5) rotate(90)" font-family="Liberation Sans, sans-serif" font-size="16.4" fill="#707070" textLength="15.5" lengthAdjust="spacingAndGlyphs">25</text><text transform="translate(80.1,528.9) rotate(90)" font-family="Liberation Sans, sans-serif" font-size="16.4" fill="#707070" textLength="15" lengthAdjust="spacingAndGlyphs">50</text></svg>
<div class="tb"><div class="model"><span>MODEL</span><div class="abs" style="left:83.2px;top:32.2px;width:0;height:0;border-left:3.5px solid transparent;border-right:3.5px solid transparent;border-top:5px solid #fff"></div><div class="abs" style="left:6px;top:22px;width:1px;height:23px;background:#8f8f8f"></div><div class="abs" style="left:10px;top:22px;width:1px;height:23px;background:#8f8f8f"></div></div><div class="abs" style="left:117.2px;top:51px;width:387.8px;height:17px;background:#6699cc"></div></div><div class="sep" style="left:509.5px"></div><div class="sep" style="left:852.5px"></div><div class="sep" style="left:1098.5px"></div><div class="sep" style="left:1200.5px"></div><div class="sep" style="left:1310.5px"></div><div class="sep" style="left:1396.5px"></div><div class="sep" style="left:1476.5px"></div><div class="sep" style="left:1544.5px"></div><div class="sep" style="left:1630.5px"></div><div class="sep" style="left:1710.5px"></div><div class="lbl" style="left:283.3px;top:56px;letter-spacing:0.054px;color:#fff;">SKETCH<i style="border-top-color:#fff"></i></div><div class="lbl" style="left:653.3px;top:56px;letter-spacing:-0.247px;">CREATE<i></i></div><div class="lbl" style="left:947.2px;top:56px;letter-spacing:-0.35px;">MODIFY<i></i></div><div class="lbl" style="left:1112.4px;top:56px;letter-spacing:-0.3px;">ASSEMBLE<i></i></div><div class="lbl" style="left:1214.5px;top:56px;letter-spacing:-0.003px;">CONSTRUCT<i></i></div><div class="lbl" style="left:1324.2px;top:56px;letter-spacing:-0.158px;">INSPECT<i></i></div><div class="lbl" style="left:1410.3px;top:56px;letter-spacing:-0.131px;">INSERT<i></i></div><div class="lbl" style="left:1490.2px;top:56px;letter-spacing:-0.35px;">MAKE<i></i></div><div class="lbl" style="left:1557.9px;top:56px;letter-spacing:-0.005px;">ADD-INS<i></i></div><div class="lbl" style="left:1644.3px;top:56px;letter-spacing:-0.064px;">SELECT<i></i></div><div class="lbl" style="left:1724.2px;top:56px;letter-spacing:-0.204px;">STOP SKETCH</div><div class="abs" style="left:1649px;top:8px;width:44.5px;height:44.5px;background:#5b8db8"></div><div class="ico" style="left:132px;top:14px"><svg width="32" height="32" viewBox="0 0 32 32"><rect x="2.3" y="2.1" width="26.1" height="26.4" rx="1.2" fill="url(#gG)" stroke="#333" stroke-width="1.3"/><path d="M5.8,5.2 V25.2 H18.5" fill="none" stroke="#333" stroke-width="1.2"/><rect x="5.4" y="22.6" width="3.2" height="3.2" fill="#3d7be0"/><g transform="translate(14.6,15.6) rotate(-40.4)"><path d="M0,0 L3.2,-2.1 L3.2,2.1Z" fill="#fff" stroke="#333" stroke-width=".9" stroke-linejoin="round"/><rect x="3.2" y="-2.1" width="11.2" height="4.2" fill="#f6c61c" stroke="#333" stroke-width=".9"/><path d="M3.2,-.6 H14.4" stroke="#fbe58a" stroke-width="1.2"/><rect x="14.4" y="-2.1" width="3.2" height="4.2" rx=".8" fill="#c9783a" stroke="#333" stroke-width=".9"/></g><path d="M22.599999999999998,18.9 h2.6 v4.0 h4.0 v2.6 h-4.0 v4.0 h-2.6 v-4.0 h-4.0 v-2.6 h4.0Z" fill="#fff" stroke="#2a2a2a" stroke-width="1.1" stroke-linejoin="round"/></svg></div><div class="ico" style="left:180px;top:14px"><svg width="32" height="32" viewBox="0 0 32 32"><path d="M3,24.1 H19 H22.1 A8.5,8.5 0 0 0 22.1,7.1 H19" fill="none" stroke="#333" stroke-width="1.3"/><rect x="0.8999999999999999" y="22.0" width="4.2" height="4.2" fill="#2456c7"/><rect x="16.9" y="22.0" width="4.2" height="4.2" fill="#2456c7"/><rect x="16.9" y="5.0" width="4.2" height="4.2" fill="#2456c7"/></svg></div><div class="ico" style="left:228px;top:14px"><svg width="32" height="32" viewBox="0 0 32 32" style="overflow:visible"><rect x="2.6" y="7.8" width="26.8" height="16.4" rx=".6" fill="url(#gG)" stroke="#333" stroke-width="1.3"/><rect x="0.8500000000000001" y="22.05" width="4.1" height="4.1" fill="#2456c7"/><rect x="27.15" y="5.8500000000000005" width="4.1" height="4.1" fill="#2456c7"/></svg></div><div class="ico" style="left:276px;top:14px"><svg width="32" height="32" viewBox="0 0 32 32"><path d="M1.6,1.9 V29.8 M30.4,1.9 V29.8 M2.5,11.5 H29.5" stroke="#333" stroke-width="1.2" fill="none"/><path d="M1.9,11.5 L5.6,8.9 L4.9,11.5 L5.6,14.1Z M30.1,11.5 L26.4,8.9 L27.1,11.5 L26.4,14.1Z" fill="#333"/></svg></div><div class="ico" style="left:324px;top:14px"><svg width="32" height="32" viewBox="0 0 32 32"><path d="M11.8,0.6 L30.8,0.6 L20.1,10.4 L1.4,10.4Z" fill="#fff" stroke="#333" stroke-width="1.2" stroke-linejoin="round" /><path d="M12.6,3.5 L23.6,3.5 L19.8,7.3 L8.8,7.3Z" fill="#a9c6e8" stroke="#1f3d7a" stroke-width="1.2" stroke-linejoin="round" /><path d="M7.4,17.7 L20.1,17.7 L20.1,29.4 L7.4,29.4Z" fill="url(#gG2)" stroke="#333" stroke-width="1.3" stroke-linejoin="round" /><path d="M7.4,17.7 L11.3,13.8 L23.8,13.8 L20.1,17.7Z" fill="#a9c6e8" stroke="#1f3d7a" stroke-width="1.2" stroke-linejoin="round" /><path d="M20.1,17.7 L23.8,13.8 L23.8,25.2 L20.1,29.4Z" fill="url(#gGs)" stroke="#333" stroke-width="1.2" stroke-linejoin="round" /></svg></div><div class="ico" style="left:372px;top:14px"><svg width="32" height="32" viewBox="0 0 32 32"><path d="M31,14.3 H21.1 V9.6 A6.8,6.8 0 0 0 7.5,9.6 V14.3 H6.5 A6.25,6.25 0 0 0 6.5,26.8 H31" fill="none" stroke="#5b9cf5" stroke-width="1.4"/><path d="M31,17.4 H18.2 V9.6 A3.75,3.75 0 0 0 10.7,9.6 V17.4 H6.5 A3.15,3.15 0 0 0 6.5,23.7 H31" fill="none" stroke="#333" stroke-width="1.3"/></svg></div><div class="ico" style="left:420px;top:14px"><svg width="32" height="32" viewBox="0 0 32 32" style="overflow:visible"><circle cx="16" cy="14.8" r="14.3" fill="url(#gG)" stroke="#333" stroke-width="1.3"/><path d="M6.4,24.6 L26.6,4.4" stroke="#333" stroke-width="1.1"/><path d="M14.3,14.5 H18.3 M16.3,12.5 V16.5" stroke="#222" stroke-width="1"/><rect x="25.05" y="2.1499999999999995" width="3.9" height="3.9" fill="#2456c7"/></svg></div><div class="ico" style="left:468px;top:14px"><svg width="32" height="32" viewBox="0 0 32 32"><circle cx="15.5" cy="15.5" r="10.6" fill="none" stroke="#444" stroke-width="1.1"/><rect x="11.8" y="1.6" width="7.6" height="7.6" rx=".8" fill="url(#gG)" stroke="#333" stroke-width="1.2"/><rect x="1.5" y="11.8" width="7.8" height="7.7" rx=".8" fill="#a4c3e8" stroke="#1f3d7a" stroke-width="1.3"/><rect x="21.9" y="11.8" width="7.8" height="7.7" rx=".8" fill="#a4c3e8" stroke="#1f3d7a" stroke-width="1.3"/><rect x="11.7" y="21.7" width="7.8" height="7.7" rx=".8" fill="#a4c3e8" stroke="#1f3d7a" stroke-width="1.3"/></svg></div><div class="ico" style="left:521px;top:14px"><svg width="32" height="32" viewBox="0 0 32 32"><path d="M2.4,10 Q3.4,1.4 12,.5 H20 Q27.2,.9 27.7,9 V19 Q27.4,23.4 21.4,24.8 L21.4,10Z" fill="#caa2f3" stroke="#7b3fb0" stroke-width="1.1" stroke-linejoin="round"/><path d="M2.4,10 Q3.4,1.4 12,.5 H20 Q27.2,.9 27.7,9 L21.4,10 Q21,7.5 18.5,7.5 H5 Q3,7.6 2.4,10Z" fill="#f0e0fd" stroke="#7b3fb0" stroke-width=".9" stroke-linejoin="round"/><path d="M2.2,11 Q2.2,7.5 5,7.5 H18.5 Q21.4,7.5 21.4,11 V22 Q21.4,25.5 18.5,25.5 H5 Q2.2,25.5 2.2,22Z" fill="url(#gP)" stroke="#7b3fb0" stroke-width="1.2"/><path d="M8.5,7.5 V25.5 M14.6,7.5 V25.5 M2.2,13.6 H21.4 M2.2,19.4 H21.4" stroke="#7b3fb0" stroke-width="1.1" fill="none"/><path d="M8.5,7.5 Q10,3 14,.6 M14.6,7.5 Q16.5,3 20.6,.7 M4.2,4.4 Q14,2.6 24.6,3.6 M21.4,13.6 Q25,12 27.6,9.6 M21.4,19.4 Q25,17.6 27.6,14.6 M24.6,3.6 Q25.4,14 24.4,23.4" stroke="#7b3fb0" stroke-width=".9" fill="none" opacity=".9"/><rect x="23.1" y="19.1" width="8.8" height="10.7" fill="#dedede" stroke="#2e2e2e" stroke-width="1.2"/><path d="M22.4,23 V25.8" stroke="#dedede" stroke-width="1.6"/><path d="M23.2,24.4 H26.6" stroke="#222" stroke-width="1.2"/><path d="M26.1,21 L30,24.4 L26.1,27.9Z" fill="#222"/></svg></div><div class="ico" style="left:570px;top:14px"><svg width="32" height="32" viewBox="0 0 32 32"><path d="M1.3,5.5 L5.5,0.7 L23.6,0.7 L19,5.5Z" fill="#cfe0f2" stroke="#1f3d7a" stroke-width="1.3" stroke-linejoin="round" /><path d="M19,5.5 L23.6,0.7 L23.6,24.2 L19,29.3Z" fill="url(#gBs)" stroke="#1f3d7a" stroke-width="1.2" stroke-linejoin="round" /><path d="M1.3,5.5 L19,5.5 L19,29.3 L1.3,29.3Z" fill="url(#gB)" stroke="#1f3d7a" stroke-width="1.3" stroke-linejoin="round" /><path d="M1.3,25.4 H19 V29.3 H1.3Z" fill="#c6cad6" stroke="none"/><path d="M1.8,25.6 H18.6" stroke="#eef1f6" stroke-width="1.2"/><path d="M19,25.4 L23.6,20.3 V24.2 L19,29.3Z" fill="#dfe2ea" stroke="none"/><path d="M1.3,24.6 V29.3 H19 L23.6,24.2 V20.4" fill="none" stroke="#2e2e2e" stroke-width="1.4" stroke-linejoin="round"/><path d="M28.4,26.8 V4.6 M26.1,7.2 L28.4,4.2 L30.7,7.2" fill="none" stroke="#2a2a2a" stroke-width="1.2"/></svg></div><div class="ico" style="left:618px;top:14px"><svg width="32" height="32" viewBox="0 0 32 32"><path d="M29.9,5.6 Q16,-1.5 2.8,5.2" fill="none" stroke="#333" stroke-width="1.1"/><path d="M1,6.8 L3.4,2.6 L6,6.6Z" fill="#222"/><path d="M1.2,14.8 Q2,8.6 15.8,8.6 Q29.6,8.6 30.4,14.3 L23.1,19 Q15.8,14 8.5,19Z" fill="#cfe0f2" stroke="#1f3d7a" stroke-width="1.2" stroke-linejoin="round"/><path d="M1.2,14.8 L8.5,19 L8.5,28.4 L1.2,22.6Z" fill="url(#gBs)" stroke="#1f3d7a" stroke-width="1.2" stroke-linejoin="round" /><path d="M8.5,19 Q15.8,14 23.1,19 V28.4 Q15.8,23.4 8.5,28.4Z" fill="url(#gB)" stroke="#1f3d7a" stroke-width="1.2" stroke-linejoin="round"/><path d="M23.1,19 L30.4,14.3 L30.4,22.1 L23.1,28.4Z" fill="#f4f5f8" stroke="#333" stroke-width="1.2" stroke-linejoin="round" /></svg></div><div class="ico" style="left:666px;top:14px"><svg width="32" height="32" viewBox="0 0 32 32"><path d="M8.8,.9 H18.6 L13.2,7.4 H26.4 Q30.4,8 30.2,11.8 L19.6,20.8 H11.6 L17.6,14 H4.4 Q1,13 1.4,9.4Z" fill="#cfe0f2" stroke="#1f3d7a" stroke-width="1.2" stroke-linejoin="round"/><path d="M18.6,.9 L18.6,5 L16.6,7.4 H13.2Z" fill="#7f9fcb" stroke="#1f3d7a" stroke-width="1" stroke-linejoin="round"/><path d="M1.4,9.4 Q1,13 4.4,14 H17.6 L11.6,20.8 V24 H4.6 Q1.2,23 1.4,19Z" fill="url(#gB)" stroke="#1f3d7a" stroke-width="1.2" stroke-linejoin="round"/><path d="M30.2,11.8 V20.4 L20.8,29 V20.8 H19.6Z" fill="url(#gBs)" stroke="#1f3d7a" stroke-width="1.2" stroke-linejoin="round"/><rect x="11.8" y="20.2" width="9.1" height="9.2" rx=".6" fill="url(#gG)" stroke="#333" stroke-width="1.3"/></svg></div><div class="ico" style="left:714px;top:14px"><svg width="32" height="32" viewBox="0 0 32 32"><path d="M2.4,9.6 L9.2,2.3 L29.5,2.3 L22.7,9.6Z" fill="#f4f5f8" stroke="#333" stroke-width="1.3" stroke-linejoin="round" /><path d="M22.7,9.6 L29.5,2.3 L29.5,22.099999999999998 L22.7,29.4Z" fill="url(#gGs)" stroke="#333" stroke-width="1.3" stroke-linejoin="round" /><path d="M2.4,9.6 L22.7,9.6 L22.7,29.4 L2.4,29.4Z" fill="url(#gG2)" stroke="#333" stroke-width="1.3" stroke-linejoin="round" /><circle cx="12.6" cy="19.5" r="7.2" fill="#a9c9ec" stroke="#1f3d7a" stroke-width="1.2"/><path d="M10.4,12.7 A7.2,7.2 0 0 1 19.6,20.6 Q13,20.2 10.4,12.7Z" fill="#f7f9fc" stroke="#1f3d7a" stroke-width="1"/></svg></div><div class="ico" style="left:762px;top:14px"><svg width="32" height="32" viewBox="0 0 32 32"><path d="M21,5.4 L25.9,10.8 M5.5,21.1 L11.1,26 M25.9,21.1 L21,26" fill="none" stroke="#1e2430" stroke-width="1.3"/><path d="M11.4,3.6 L13.4,1.2 H20.8 V8.2 L19.2,10.6 H12.4 Q11.4,10.6 11.4,9.6Z" fill="#c9cdd8" stroke="#1a2030" stroke-width="1.3" stroke-linejoin="round"/><rect x="11.6" y="3.3" width="7.8" height="7.2" rx="1" fill="url(#gG2)" stroke="#1a2030" stroke-width="1.2"/><path d="M1.2,13.399999999999999 L3.0,11.2 H10.799999999999999 V18.6 L9.0,20.799999999999997 H1.2Z" fill="#7d9fd0" stroke="#7d9fd0" stroke-width=".6" stroke-linejoin="round"/><path d="M1.2,13.399999999999999 L3.0,11.2 H10.799999999999999 L9.0,13.399999999999999Z" fill="#d3e2f4"/><rect x="1.2" y="13.399999999999999" width="7.8" height="7.4" fill="url(#gB)"/><path d="M21.4,13.399999999999999 L23.2,11.2 H31.0 V18.6 L29.2,20.799999999999997 H21.4Z" fill="#7d9fd0" stroke="#7d9fd0" stroke-width=".6" stroke-linejoin="round"/><path d="M21.4,13.399999999999999 L23.2,11.2 H31.0 L29.2,13.399999999999999Z" fill="#d3e2f4"/><rect x="21.4" y="13.399999999999999" width="7.8" height="7.4" fill="url(#gB)"/><path d="M11.3,23.5 L13.100000000000001,21.3 H20.9 V28.700000000000003 L19.1,30.9 H11.3Z" fill="#7d9fd0" stroke="#7d9fd0" stroke-width=".6" stroke-linejoin="round"/><path d="M11.3,23.5 L13.100000000000001,21.3 H20.9 L19.1,23.5Z" fill="#d3e2f4"/><rect x="11.3" y="23.5" width="7.8" height="7.4" fill="url(#gB)"/></svg></div><div class="ico" style="left:810px;top:14px"><svg width="32" height="32" viewBox="0 0 32 32"><path d="M15.5,.3 V30" stroke="#333" stroke-width="1.1"/><path d="M2.25,3.9 L7.5,1.3 L13.7,5.5 L13.7,17.4 L10.6,19 L8,19 L8,26.3 L5.9,27.5 L2.25,27.5Z" fill="url(#gG)" stroke="#333" stroke-width="1.2" stroke-linejoin="round" /><path d="M2.25,3.9 L8.4,7.2 V17 L13.7,17.4 M8.4,7.2 L13.7,5.5" fill="none" stroke="#333" stroke-width="1"/><path d="M28.75,3.9 L23.5,1.3 L17.3,5.5 L17.3,17.4 L20.4,19 L23,19 L23,26.3 L25.1,27.5 L28.75,27.5Z" fill="url(#gB)" stroke="#1f3d7a" stroke-width="1.2" stroke-linejoin="round" /><path d="M28.75,3.9 L22.6,7.2 V17 L17.3,17.4 M22.6,7.2 L17.3,5.5" fill="none" stroke="#1f3d7a" stroke-width="1"/></svg></div><div class="ico" style="left:863px;top:14px"><svg width="32" height="32" viewBox="0 0 32 32" style="overflow:visible"><path d="M2.4,7.5 L9.7,0.8 L13.8,0.8 L7.6,7.5 L7.6,29.4 L2.4,29.4Z" fill="url(#gG)" stroke="#333" stroke-width="1.3" stroke-linejoin="round" /><path d="M7.6,7.5 L13.8,0.8 L28.4,0.8 L21.1,7.5Z" fill="#cfe0f2" stroke="#1f3d7a" stroke-width="1.2" stroke-linejoin="round" /><path d="M21.1,7.5 L28.4,0.8 L28.4,22.1 L21.1,29.4Z" fill="url(#gBs)" stroke="#1f3d7a" stroke-width="1.2" stroke-linejoin="round" /><path d="M7.6,7.5 L21.1,7.5 L21.1,29.4 L7.6,29.4Z" fill="url(#gB)" stroke="#1f3d7a" stroke-width="1.2" stroke-linejoin="round" /><path d="M23.8,12.1 H27.6 V10 L32,13.8 L27.6,17.6 V15.5 H23.8Z" fill="#2a2a2a"/></svg></div><div class="ico" style="left:911px;top:14px"><svg width="32" height="32" viewBox="0 0 32 32"><path d="M2.5,9.6 L9.3,2.3 H20.2 Q29.1,2.6 29.1,11.2 V22.6 L22.9,29.4 H2.5Z" fill="url(#gG2)" stroke="#333" stroke-width="1.3" stroke-linejoin="round"/><path d="M2.5,9.6 L9.3,2.3 H20.2 L13,8.3 L11,9.6Z" fill="#f4f5f8" stroke="none"/><path d="M22.9,29.4 V20.5 L29.1,14.8 V22.6Z" fill="url(#gGs)" stroke="#333" stroke-width="1.1" stroke-linejoin="round"/><path d="M12.6,8.3 L17.6,2.7 Q29.1,1.2 29.1,11 V14.8 L23,20.4 Q22.6,10.2 12.6,8.3Z" fill="url(#gB)" stroke="#1f3d7a" stroke-width="1.2" stroke-linejoin="round"/></svg></div><div class="ico" style="left:960px;top:14px"><svg width="32" height="32" viewBox="0 0 32 32"><path d="M1.5,11.7 L12.4,0.6 L22.8,0.6 L30.1,8.1 L30.1,29.4 L9.3,29.4 L1.5,21.6Z" fill="url(#gG2)" stroke="#333" stroke-width="1.3" stroke-linejoin="round" /><path d="M12.4,0.6 L22.8,0.6 L30.1,8.1 L20.7,8.6Z" fill="#f4f5f8" stroke="none" stroke-width="0" stroke-linejoin="round" /><path d="M1.5,11.7 L9.6,19.5 L9.6,29.4 L1.5,21.6Z" fill="#e4e6ec" stroke="#333" stroke-width="1" stroke-linejoin="round" /><path d="M1.5,11.7 L12.4,0.6 L20.7,8.6 L9.6,19.5Z" fill="url(#gB)" stroke="#1f3d7a" stroke-width="1.2" stroke-linejoin="round" /><path d="M1.5,11.7 L12.4,0.6 L22.8,0.6 L30.1,8.1 L30.1,29.4 L9.3,29.4 L1.5,21.6Z" fill="none" stroke="#333" stroke-width="1.3" stroke-linejoin="round" /></svg></div><div class="ico" style="left:1008px;top:14px"><svg width="32" height="32" viewBox="0 0 32 32"><path d="M2.4,9.6 L9.2,2.3 L29.5,2.3 L22.7,9.6Z" fill="#f4f5f8" stroke="#333" stroke-width="1.3" stroke-linejoin="round" /><path d="M22.7,9.6 L29.5,2.3 L29.5,22.099999999999998 L22.7,29.4Z" fill="url(#gGs)" stroke="#333" stroke-width="1.3" stroke-linejoin="round" /><path d="M2.4,9.6 L22.7,9.6 L22.7,29.4 L2.4,29.4Z" fill="url(#gG2)" stroke="#333" stroke-width="1.3" stroke-linejoin="round" /><rect x="6.4" y="13.3" width="12.5" height="12" rx=".6" fill="#a9c6e8" stroke="#1f3d7a" stroke-width="1.3"/><rect x="11.6" y="13.9" width="6.7" height="6.2" fill="#f7f8fa" stroke="#1f3d7a" stroke-width="1.1"/><path d="M6.8,25 L11.6,20.1" stroke="#1f3d7a" stroke-width="1"/></svg></div><div class="ico" style="left:1056px;top:14px"><svg width="32" height="32" viewBox="0 0 32 32"><circle cx="16.1" cy="15.7" r="13.8" fill="url(#gSph)" stroke="#9a9a9a" stroke-width="1"/><path d="M13,2.3 A13.8,13.8 0 0 1 29.6,12.6 Q22,13 17.6,18.6 Q12,11 13,2.3Z" fill="#d98b96"/><path d="M29.6,12.6 A13.8,13.8 0 0 1 12.4,29 Q11,20 17.6,18.6 Q22,13 29.6,12.6Z" fill="#f2cf45"/><path d="M29.6,12.6 A13.8,13.8 0 0 1 24,27 Q17,24 17.6,18.6 Q22,13 29.6,12.6Z" fill="#f5d95a" opacity=".6"/><circle cx="16.1" cy="15.7" r="13.8" fill="none" stroke="#9a9a9a" stroke-width="1"/></svg></div><div class="ico" style="left:1109px;top:14px"><svg width="32" height="32" viewBox="0 0 32 32" style="overflow:visible"><path d="M2.5,17.7 L6.1,13.5 L18.0,13.5 L14.4,17.7Z" fill="#f4f5f8" stroke="#333" stroke-width="1.3" stroke-linejoin="round" /><path d="M14.4,17.7 L18.0,13.5 L18.0,25.2 L14.4,29.4Z" fill="url(#gGs)" stroke="#333" stroke-width="1.3" stroke-linejoin="round" /><path d="M2.5,17.7 L14.4,17.7 L14.4,29.4 L2.5,29.4Z" fill="url(#gG2)" stroke="#333" stroke-width="1.3" stroke-linejoin="round" /><path d="M15,17.7 L18.7,13.399999999999999 L30.599999999999998,13.399999999999999 L26.9,17.7Z" fill="#f4f5f8" stroke="#333" stroke-width="1.3" stroke-linejoin="round" /><path d="M26.9,17.7 L30.599999999999998,13.399999999999999 L30.599999999999998,25.099999999999998 L26.9,29.4Z" fill="url(#gGs)" stroke="#333" stroke-width="1.3" stroke-linejoin="round" /><path d="M15,17.7 L26.9,17.7 L26.9,29.4 L15,29.4Z" fill="url(#gG2)" stroke="#333" stroke-width="1.3" stroke-linejoin="round" /><path d="M2.5,4.9 L6.1,1.3000000000000003 L18.6,1.3000000000000003 L15,4.9Z" fill="#cfe0f2" stroke="#1f3d7a" stroke-width="1.2" stroke-linejoin="round" /><path d="M15,4.9 L18.6,1.3000000000000003 L18.6,13.299999999999999 L15,16.9Z" fill="url(#gBs)" stroke="#1f3d7a" stroke-width="1.2" stroke-linejoin="round" /><path d="M2.5,4.9 L15,4.9 L15,16.9 L2.5,16.9Z" fill="url(#gB)" stroke="#1f3d7a" stroke-width="1.2" stroke-linejoin="round" /><path d="M5.5,0.2999999999999998 h2.6 v4.1000000000000005 h4.1000000000000005 v2.6 h-4.1000000000000005 v4.1000000000000005 h-2.6 v-4.1000000000000005 h-4.1000000000000005 v-2.6 h4.1000000000000005Z" fill="#fff" stroke="#2a2a2a" stroke-width="1.1" stroke-linejoin="round"/></svg></div><div class="ico" style="left:1158px;top:14px"><svg width="32" height="32" viewBox="0 0 32 32"><path d="M2.4,11.2 L9.2,3.9 L9.2,19.5 L4.5,27.5 L2.4,26.8Z" fill="url(#gG2)" stroke="#333" stroke-width="1.2" stroke-linejoin="round" /><path d="M2.4,11.2 L4.5,12 L4.5,27.5 L2.4,26.8Z" fill="#f4f5f8" stroke="#333" stroke-width="1" stroke-linejoin="round" /><path d="M8.7,4.4 V13.6 A2.85,1.4 0 0 0 14.4,13.6 V4.4" fill="url(#gG2)" stroke="#333" stroke-width="1.2"/><ellipse cx="11.55" cy="4.4" rx="2.85" ry="1.9" fill="#f4f5f8" stroke="#333" stroke-width="1.1"/><circle cx="11.6" cy="4.4" r=".6" fill="#222"/><path d="M11.6,15.6 V21.2" stroke="#f07a10" stroke-width="1.3"/><path d="M21.7,6.5 L29.5,13.3 L29.5,28.4 L27.9,28.4 L21.7,22.1Z" fill="url(#gG2)" stroke="#333" stroke-width="1.2" stroke-linejoin="round" /><path d="M27.9,14 L29.5,13.3 L29.5,28.4 L27.9,28.4Z" fill="#c9cdd8" stroke="#333" stroke-width="1" stroke-linejoin="round" /><path d="M16.5,13.9 V21.8 A2.6,1.4 0 0 0 21.7,21.8 V13.9" fill="url(#gG2)" stroke="#333" stroke-width="1.2"/><ellipse cx="19.1" cy="13.9" rx="2.6" ry="1.6" fill="#f4f5f8" stroke="#333" stroke-width="1.1"/><path d="M19.3,8.1 V13.9" stroke="#f07a10" stroke-width="1.3"/></svg></div><div class="ico" style="left:1216px;top:14px"><svg width="32" height="32" viewBox="0 0 32 32"><path d="M1.5,8.6 L8.5,1.3 L18.9,1.3 L11.6,8.6Z" fill="#f4f5f8" stroke="#333" stroke-width="1.3" stroke-linejoin="round" /><path d="M11.6,8.6 L18.9,1.3 L18.9,22.1 L11.6,29.4Z" fill="#4f9440" stroke="#2d5e24" stroke-width="1.2" stroke-linejoin="round" /><path d="M1.5,8.6 L11.6,8.6 L11.6,29.4 L1.5,29.4Z" fill="url(#gG2)" stroke="#333" stroke-width="1.3" stroke-linejoin="round" /><path d="M22.3,9.6 L30.7,1.3 L30.7,21.6 L22.3,29.7Z" fill="#e8935a" stroke="#8a3a10" stroke-width="1.2" stroke-linejoin="round" /></svg></div><div class="ico" style="left:1264px;top:14px"><svg width="32" height="32" viewBox="0 0 32 32"><path d="M1.6,11.2 L6.3,6.5 L29.8,6.5 L24.5,11.2Z" fill="#f1f2f5" stroke="#2d5e24" stroke-width="1.2" stroke-linejoin="round" /><path d="M1.6,11.2 L24.5,11.2 L24.5,24.2 L1.6,24.2Z" fill="url(#gG2)" stroke="#2d5e24" stroke-width="1.2" stroke-linejoin="round" /><path d="M24.5,11.2 L29.8,6.5 L29.8,19 L24.5,24.2Z" fill="#4f9440" stroke="#2d5e24" stroke-width="1.2" stroke-linejoin="round" /><path d="M1.6,11.2 L6.3,6.5 L6.3,19 L1.6,24.2Z" fill="#8fbf85" stroke="#2d5e24" stroke-width="1.1" stroke-linejoin="round" opacity=".85"/><path d="M11.5,9.6 L19.9,1.3 L19.9,21.1 L11.5,29.7Z" fill="#eba274" stroke="#8a3a10" stroke-width="1.2" stroke-linejoin="round" fill-opacity=".82"/></svg></div><div class="ico" style="left:1337px;top:14px"><svg width="32" height="32" viewBox="0 0 32 32"><path d="M2.3,10.4 H30.6 M2.3,8.1 V12.8 M30.6,8.1 V12.8" stroke="#333" stroke-width="1.1" fill="none"/><rect x="2.3" y="18.3" width="28.3" height="5.4" rx=".8" fill="url(#gY)" stroke="#b4790f" stroke-width="1.1"/><path d="M5,18.6 v1.8 M7.5,18.6 v1.8 M10,18.6 v1.8 M12.5,18.6 v1.8 M15,18.6 v1.8 M17.5,18.6 v1.8 M20,18.6 v1.8 M22.5,18.6 v1.8 M25,18.6 v1.8 M27.5,18.6 v1.8" stroke="#fbe9a8" stroke-width=".9"/></svg></div><div class="ico" style="left:1421px;top:14px"><svg width="32" height="32" viewBox="0 0 32 32"><rect x="1.5" y=".6" width="29" height="28.8" rx="1" fill="url(#gSky)" stroke="#3a3d45" stroke-width="1.5"/><path d="M18,19.5 L23.6,15.6 L30,21 V28.6 H18Z" fill="#a3a9b6"/><path d="M2.2,22.4 L10,13.6 L30,28.6 H2.2Z" fill="#6d7280"/><path d="M10,13.6 L13.5,16.3 Q11,19 13.5,22 Q11.5,25 16,28.6 H30Z" fill="#8c92a0"/><path d="M10,13.6 L30,28.6" stroke="#e8e4dc" stroke-width=".9"/><circle cx="22" cy="8.1" r="2.6" fill="#fff" stroke="#f7e8a0" stroke-width="1.2"/><rect x="1.5" y=".6" width="29" height="28.8" rx="1" fill="none" stroke="#3a3d45" stroke-width="1.5"/></svg></div><div class="ico" style="left:1495px;top:14px"><svg width="32" height="32" viewBox="0 0 32 32"><path d="M1.3,7 L4.6,2.2 H27.4 L30.7,7 V28 Q30.7,29.5 29.2,29.5 H2.8 Q1.3,29.5 1.3,28Z" fill="url(#gG)" stroke="#3a3d45" stroke-width="1.4" stroke-linejoin="round"/><path d="M1.3,7 L4.6,2.2 H27.4 L30.7,7Z" fill="#fbfbfc" stroke="#3a3d45" stroke-width="1.1" stroke-linejoin="round"/><rect x="4.3" y="12.3" width="23.4" height="14.2" rx="1.2" fill="#3f434b" stroke="#2a2d33" stroke-width="1"/><rect x="5.6" y="13.6" width="20.8" height="11.6" rx=".8" fill="#6a6f7a"/><path d="M10.3,19 H21.7 L25.4,24.6 H6.6Z" fill="#f1f1f1" stroke="#c8c8c8" stroke-width=".6"/><path d="M8.6,21.6 H23.4 M12.6,19 L11,24.6 M16,19 V24.6 M19.4,19 L21,24.6" stroke="#c4c4c4" stroke-width=".6"/><path d="M14.3,12.6 H17.7 V17.6 L16,20 L14.3,17.6Z" fill="#4d8ee0" stroke="#1f4fa0" stroke-width=".9"/><rect x="25.2" y="9" width="1.8" height="1.8" fill="#1c8a1c"/></svg></div><div class="ico" style="left:1572px;top:14px"><svg width="32" height="32" viewBox="0 0 32 32" style="overflow:visible"><rect x="1.5" y="2.2" width="23.3" height="21.2" rx="1" fill="url(#gG2)" stroke="#3a3d45" stroke-width="1.3"/><rect x="1.5" y="2.2" width="23.3" height="5.2" fill="#b9b9bc" stroke="#3a3d45" stroke-width="1.2"/><rect x="2.6" y="3.6" width="21" height="1.8" fill="#7c7d82"/><path d="M5,11.2 L7.8,13.4 L5,15.6 M9.6,13.6 H13.6" fill="none" stroke="#2a2a2a" stroke-width="1.2"/><path d="M31.00,21.70 L31.00,24.10 L28.96,24.07 L28.36,25.51 L29.83,26.93 L28.13,28.63 L26.71,27.16 L25.27,27.76 L25.30,29.80 L22.90,29.80 L22.93,27.76 L21.49,27.16 L20.07,28.63 L18.37,26.93 L19.84,25.51 L19.24,24.07 L17.20,24.10 L17.20,21.70 L19.24,21.73 L19.84,20.29 L18.37,18.87 L20.07,17.17 L21.49,18.64 L22.93,18.04 L22.90,16.00 L25.30,16.00 L25.27,18.04 L26.71,18.64 L28.13,17.17 L29.83,18.87 L28.36,20.29 L28.96,21.73Z" fill="#dfe6f5" stroke="#2a4fa0" stroke-width="1.1" stroke-linejoin="round"/><circle cx="24.1" cy="22.9" r="2.3" fill="#fff" stroke="#2a4fa0" stroke-width="1"/></svg></div><div class="ico" style="left:1655px;top:14px"><svg width="32" height="32" viewBox="0 0 32 32" style="overflow:visible"><rect x="1.4" y=".8" width="20.2" height="14" fill="none" stroke="#55a305" stroke-width="1.4"/><path d="M21.6,15.2 V28.6 L24.8,25.6 L27.2,30.6 L29.4,29.6 L27,24.7 H31.2Z" fill="#fff" stroke="#1e1e1e" stroke-width="1.1" stroke-linejoin="round"/></svg></div><div class="ico" style="left:1753px;top:14px"><svg width="32" height="32" viewBox="0 0 32 32" style="overflow:visible"><path d="M16.6,0.9 L30.1,8.75 L15.5,24.4 L1.5,16.6Z" fill="url(#gG)" stroke="#3a3a3a" stroke-width="1.2" stroke-linejoin="round" /><path d="M11.6,6.1 L25.2,13.9 M6.6,11.4 L20.4,19.2 M21.1,3.5 L6.2,19.2 M25.6,6.1 L10.8,21.8" stroke="#6d7078" stroke-width="1" fill="none"/><path d="M14.5,23.3 L19.2,29 L30.6,18.2" fill="none" stroke="#4da503" stroke-width="3.4"/></svg></div>
<div class="abs" style="left:4px;top:76.6px;width:118px;height:24px;background:#d9d9d9;border:1px solid #b9b9b9;box-sizing:border-box"></div><div class="abs" style="left:31px;top:82px;font-size:12px;color:#555;line-height:14px">BROWSER</div><svg class="abs" style="left:8px;top:84px" width="14" height="9"><path d="M5.6,1.8 L.9,4.7 L5.6,7.6Z M11.2,1.8 L6.4,4.7 L11.2,7.6Z" fill="#2e2e2e"/></svg><div class="abs" style="left:41.2px;top:106.3px;width:82px;height:21.6px;background:#c6c6c6"></div><div class="abs" style="left:43.1px;top:108.2px;width:80px;height:17.7px;background:#808080"></div><div class="abs" style="left:102px;top:109.5px;font-size:12px;font-weight:bold;color:#fff;line-height:15px">Unt</div><div class="abs" style="left:59px;top:132.3px;width:64px;height:21.4px;background:#cbcbcb"></div><div class="abs" style="left:59px;top:158.3px;width:64px;height:21.4px;background:#cbcbcb"></div><div class="abs" style="left:59px;top:184.3px;width:64px;height:21.4px;background:#cbcbcb"></div><div class="abs" style="left:59px;top:210.3px;width:64px;height:21.4px;background:#cbcbcb"></div><div class="abs" style="left:59px;top:236.3px;width:64px;height:21.4px;background:#cbcbcb"></div><div class="abs" style="left:76.1px;top:262.2px;width:47px;height:21.6px;background:#cbcbcb"></div><div class="abs" style="left:76.1px;top:288.2px;width:47px;height:21.6px;background:#cbcbcb"></div><div class="abs" style="left:94.5px;top:136.8px;font-size:12px;color:#555;line-height:15px">Docu</div><div class="abs" style="left:94.5px;top:162.8px;font-size:12px;color:#555;line-height:15px">Nam</div><div class="abs" style="left:120.4px;top:189.2px;font-size:12px;color:#555;line-height:15px;will-change:transform">Origin</div><div class="abs" style="left:120.4px;top:215.2px;font-size:12px;color:#555;line-height:15px;will-change:transform">Bodies</div><div class="abs" style="left:120.4px;top:241.2px;font-size:12px;color:#555;line-height:15px;will-change:transform">Sketches</div><svg class="abs" style="left:0;top:100px" width="122" height="215" viewBox="0 100 122 215"><defs><linearGradient id="gTri" x1="0" y1="0" x2="1" y2="1"><stop offset=".3" stop-color="#c8c8c8"/><stop offset="1" stop-color="#3a3a3a"/></linearGradient><linearGradient id="gF" x1="0" y1="0" x2="0" y2="1"><stop offset="0" stop-color="#ffffff"/><stop offset="1" stop-color="#d0d4de"/></linearGradient><linearGradient id="gCf" x1="0" y1="0" x2="0" y2="1"><stop offset="0" stop-color="#eceef2"/><stop offset="1" stop-color="#cfd3dc"/></linearGradient></defs><path d="M21.900000000000002,122.3 H32.7 V111.39999999999999Z" fill="url(#gTri)" stroke="#2c2c2c" stroke-width="1" stroke-linejoin="round"/><defs><radialGradient id="bY115525" cx=".4" cy=".35" r=".7"><stop offset="0" stop-color="#fffbd0"/><stop offset=".6" stop-color="#f7dc3c"/><stop offset="1" stop-color="#d8a810"/></radialGradient></defs><path d="M50.6,119 h3.8 v3.6 q-1.9,1.2 -3.8,0Z" fill="#d4d4da" stroke="#55555c" stroke-width=".9"/><circle cx="52.5" cy="115" r="4.6" fill="url(#bY115525)" stroke="#b48a10" stroke-width=".9"/><path d="M71.9,113.4 L75.30000000000001,110.0 L86.0,110.0 L82.6,113.4Z" fill="#ffffff" stroke="#3a3a3a" stroke-width="1" stroke-linejoin="round" /><path d="M82.6,113.4 L86.0,110.0 L86.0,120.8 L82.6,124.2Z" fill="#f1f2f5" stroke="#3a3a3a" stroke-width="1" stroke-linejoin="round" /><path d="M71.9,113.4 L82.6,113.4 L82.6,124.2 L71.9,124.2Z" fill="url(#gCf)" stroke="#3a3a3a" stroke-width="1" stroke-linejoin="round" /><path d="M41.3,137.3 V149.3 L50.099999999999994,143.3Z" fill="url(#gG2)" stroke="#2c2c2c" stroke-width="1.2" stroke-linejoin="round"/><path d="M41.3,163.3 V175.3 L50.099999999999994,169.3Z" fill="url(#gG2)" stroke="#2c2c2c" stroke-width="1.2" stroke-linejoin="round"/><path d="M41.3,189.3 V201.3 L50.099999999999994,195.3Z" fill="url(#gG2)" stroke="#2c2c2c" stroke-width="1.2" stroke-linejoin="round"/><path d="M41.3,215.3 V227.3 L50.099999999999994,221.3Z" fill="url(#gG2)" stroke="#2c2c2c" stroke-width="1.2" stroke-linejoin="round"/><path d="M40.0,252.2 H50.8 V241.29999999999998Z" fill="url(#gTri)" stroke="#2c2c2c" stroke-width="1" stroke-linejoin="round"/><path d="M78.78,141.34 L78.78,144.06 L76.45,144.01 L75.77,145.63 L77.46,147.24 L75.54,149.16 L73.93,147.47 L72.31,148.15 L72.36,150.48 L69.64,150.48 L69.69,148.15 L68.07,147.47 L66.46,149.16 L64.54,147.24 L66.23,145.63 L65.55,144.01 L63.22,144.06 L63.22,141.34 L65.55,141.39 L66.23,139.77 L64.54,138.16 L66.46,136.24 L68.07,137.93 L69.69,137.25 L69.64,134.92 L72.36,134.92 L72.31,137.25 L73.93,137.93 L75.54,136.24 L77.46,138.16 L75.77,139.77 L76.45,141.39Z" fill="#686868" stroke="#686868" stroke-width="1.1" stroke-linejoin="round"/><circle cx="71" cy="142.7" r="3.1" fill="#cbcbcb" stroke="#686868" stroke-width="1"/><path d="M63.2,164.8 q0,-1 1,-1 h5.4 l.8,1.8 h6.3 q1,0 1,1 v8 q0,1 -1,1 h-12.5 q-1,0 -1,-1Z" fill="url(#gF)" stroke="#2f3340" stroke-width="1.1" stroke-linejoin="round"/><path d="M63.6,166.20000000000002 H70.2" stroke="#2f3340" stroke-width=".9"/><defs><radialGradient id="bB194002" cx=".4" cy=".35" r=".7"><stop offset="0" stop-color="#ffffff"/><stop offset=".6" stop-color="#c4d6f6"/><stop offset="1" stop-color="#8aa6d8"/></radialGradient></defs><path d="M68.3,197.3 h3.8 v3.6 q-1.9,1.2 -3.8,0Z" fill="#d4d4da" stroke="#55555c" stroke-width=".9"/><circle cx="70.2" cy="193.3" r="4.6" fill="url(#bB194002)" stroke="#6f8cc0" stroke-width=".9"/><path d="M89.3,190.7 q0,-1 1,-1 h5.4 l.8,1.8 h6.3 q1,0 1,1 v8 q0,1 -1,1 h-12.5 q-1,0 -1,-1Z" fill="url(#gF)" stroke="#2f3340" stroke-width="1.1" stroke-linejoin="round"/><path d="M89.7,192.1 H96.3" stroke="#2f3340" stroke-width=".9"/><defs><radialGradient id="bY220002" cx=".4" cy=".35" r=".7"><stop offset="0" stop-color="#fffbd0"/><stop offset=".6" stop-color="#f7dc3c"/><stop offset="1" stop-color="#d8a810"/></radialGradient></defs><path d="M68.3,223.3 h3.8 v3.6 q-1.9,1.2 -3.8,0Z" fill="#d4d4da" stroke="#55555c" stroke-width=".9"/><circle cx="70.2" cy="219.3" r="4.6" fill="url(#bY220002)" stroke="#b48a10" stroke-width=".9"/><path d="M89.3,216.7 q0,-1 1,-1 h5.4 l.8,1.8 h6.3 q1,0 1,1 v8 q0,1 -1,1 h-12.5 q-1,0 -1,-1Z" fill="url(#gF)" stroke="#2f3340" stroke-width="1.1" stroke-linejoin="round"/><path d="M89.7,218.1 H96.3" stroke="#2f3340" stroke-width=".9"/><defs><radialGradient id="bY246002" cx=".4" cy=".35" r=".7"><stop offset="0" stop-color="#fffbd0"/><stop offset=".6" stop-color="#f7dc3c"/><stop offset="1" stop-color="#d8a810"/></radialGradient></defs><path d="M68.3,249.3 h3.8 v3.6 q-1.9,1.2 -3.8,0Z" fill="#d4d4da" stroke="#55555c" stroke-width=".9"/><circle cx="70.2" cy="245.3" r="4.6" fill="url(#bY246002)" stroke="#b48a10" stroke-width=".9"/><path d="M89.3,242.7 q0,-1 1,-1 h5.4 l.8,1.8 h6.3 q1,0 1,1 v8 q0,1 -1,1 h-12.5 q-1,0 -1,-1Z" fill="url(#gF)" stroke="#2f3340" stroke-width="1.1" stroke-linejoin="round"/><path d="M89.7,244.1 H96.3" stroke="#2f3340" stroke-width=".9"/><defs><radialGradient id="bB272073" cx=".4" cy=".35" r=".7"><stop offset="0" stop-color="#ffffff"/><stop offset=".6" stop-color="#c4d6f6"/><stop offset="1" stop-color="#8aa6d8"/></radialGradient></defs><path d="M85.39999999999999,275.2 h3.8 v3.6 q-1.9,1.2 -3.8,0Z" fill="#d4d4da" stroke="#55555c" stroke-width=".9"/><circle cx="87.3" cy="271.2" r="4.6" fill="url(#bB272073)" stroke="#6f8cc0" stroke-width=".9"/><rect x="106.4" y="265.3" width="15.4" height="15.4" fill="#f2f4f8" stroke="#111" stroke-width="1.5"/><rect x="108.2" y="275.90000000000003" width="4" height="3.4" fill="#5b9ae8"/><path d="M109.4,267.90000000000003 V277.90000000000003 H118.80000000000001" fill="none" stroke="#111" stroke-width="1.4"/><g transform="translate(111.0,276.3) rotate(-42)"><path d="M0,0 L3,-1.8 L3,1.8Z" fill="#f1d9b8" stroke="#333" stroke-width=".6"/><path d="M0,0 L1.2,-.7 L1.2,.7Z" fill="#222"/><rect x="3" y="-1.8" width="12" height="3.6" fill="#f4c418" stroke="#a87a10" stroke-width=".6"/><path d="M3,-.5 H15" stroke="#fbe58a" stroke-width="1"/></g><defs><radialGradient id="bY297976" cx=".4" cy=".35" r=".7"><stop offset="0" stop-color="#fffbd0"/><stop offset=".6" stop-color="#f7dc3c"/><stop offset="1" stop-color="#d8a810"/></radialGradient></defs><path d="M85.69999999999999,301.1 h3.8 v3.6 q-1.9,1.2 -3.8,0Z" fill="#d4d4da" stroke="#55555c" stroke-width=".9"/><circle cx="87.6" cy="297.1" r="4.6" fill="url(#bY297976)" stroke="#b48a10" stroke-width=".9"/><rect x="106.4" y="291.2" width="15.4" height="15.4" fill="#f2f4f8" stroke="#111" stroke-width="1.5"/><rect x="108.2" y="301.8" width="4" height="3.4" fill="#5b9ae8"/><path d="M109.4,293.8 V303.8 H118.80000000000001" fill="none" stroke="#111" stroke-width="1.4"/><g transform="translate(111.0,302.2) rotate(-42)"><path d="M0,0 L3,-1.8 L3,1.8Z" fill="#f1d9b8" stroke="#333" stroke-width=".6"/><path d="M0,0 L1.2,-.7 L1.2,.7Z" fill="#222"/><rect x="3" y="-1.8" width="12" height="3.6" fill="#f4c418" stroke="#a87a10" stroke-width=".6"/><path d="M3,-.5 H15" stroke="#fbe58a" stroke-width="1"/></g></svg>
<div class="abs" style="left:122px;top:72px;width:387px;height:639px;background:#fff;border:1px solid #858585;border-radius:2.5px;box-sizing:border-box;box-shadow:0 1px 2px rgba(0,0,0,.2)"><div class="mi" style="top:5px"><svg width="16" height="16" viewBox="0 0 16 16" style="overflow:visible"><rect x=".6" y=".7" width="13.6" height="13.7" rx=".9" fill="url(#gG)" stroke="#4a4a4a" stroke-width="1.2"/><path d="M3.4,3.2 V11.3 H8.6" fill="none" stroke="#333" stroke-width="1.1"/><rect x="3" y="9.4" width="2.2" height="2.2" fill="#3d7be0"/><g transform="translate(7.1,7.1) rotate(-39.5)"><path d="M0,0 L2,-1.4 L2,1.4Z" fill="#fff" stroke="#222" stroke-width=".8" stroke-linejoin="round"/><rect x="2" y="-1.4" width="6.2" height="2.8" fill="#f6c61c" stroke="#6a4a10" stroke-width=".7"/><rect x="8.2" y="-1.4" width="1.9" height="2.8" rx=".5" fill="#c9783a" stroke="#6a3a10" stroke-width=".7"/></g><path d="M11.75,8.3 h2.1 v2.6500000000000004 h2.6500000000000004 v2.1 h-2.6500000000000004 v2.6500000000000004 h-2.1 v-2.6500000000000004 h-2.6500000000000004 v-2.1 h2.6500000000000004Z" fill="#fff" stroke="#2a2a2a" stroke-width=".9" stroke-linejoin="round"/></svg><span style="letter-spacing:0.02px">Create Sketch</span></div><div class="mi" style="top:32px"><svg width="16" height="16" viewBox="0 0 16 16"><path d="M1.4,12 H9.2 H10.4 A4,4 0 0 0 10.4,4 H9.2" fill="none" stroke="#333" stroke-width="1.1"/><rect x="0.20000000000000018" y="10.6" width="2.8" height="2.8" fill="#2456c7"/><rect x="7.6" y="10.6" width="2.8" height="2.8" fill="#2456c7"/><rect x="7.6" y="2.6" width="2.8" height="2.8" fill="#2456c7"/></svg><span style="letter-spacing:0.154px">Line</span><b style="left:345.5px">L</b></div><div class="mi" style="top:56px"><span style="letter-spacing:0.141px">Rectangle</span><u></u></div><div class="mi" style="top:79px"><span style="letter-spacing:0.105px">Circle</span><u></u></div><div class="mi" style="top:102px"><span style="letter-spacing:-0.234px">Arc</span><u></u></div><div class="mi" style="top:125px"><span style="letter-spacing:-0.009px">Polygon</span><u></u></div><div class="mi" style="top:150px"><svg width="16" height="16" viewBox="0 0 16 16"><ellipse cx="7.6" cy="7.7" rx="6.6" ry="4.2" fill="url(#gG)" stroke="#444" stroke-width="1.1"/><path d="M5.8,7.7 H9.4 M7.6,5.9 V9.5" stroke="#222" stroke-width=".9"/><rect x="6.199999999999999" y="1.6" width="2.8" height="2.8" fill="#2456c7"/><rect x="12.799999999999999" y="6.300000000000001" width="2.8" height="2.8" fill="#2456c7"/></svg><span style="letter-spacing:0.279px">Ellipse</span></div><div class="mi" style="top:174px"><span style="letter-spacing:0.155px">Slot</span><u></u></div><div class="mi" style="top:199px"><svg width="16" height="16" viewBox="0 0 16 16" style="overflow:visible"><path d="M1.4,14.2 C1.4,9 3,7.6 7.5,8.6 C11,10.6 14.2,10.4 14.6,1.6" fill="none" stroke="#333" stroke-width="1.1"/><rect x="0.10000000000000009" y="12.799999999999999" width="2.8" height="2.8" fill="#2456c7"/><rect x="6.2" y="7.2" width="2.6" height="2.6" fill="#2456c7"/><rect x="13.1" y="0.10000000000000009" width="2.8" height="2.8" fill="#2456c7"/></svg><span style="letter-spacing:0.274px">Spline</span></div><div class="mi" style="top:225px"><svg width="16" height="16" viewBox="0 0 16 16" style="overflow:visible"><path d="M1.5,14.4 C2.5,3 12.5,3 13.5,14.4 M7.5,3.2 V5.6" fill="none" stroke="#333" stroke-width="1.1"/><rect x="0.10000000000000009" y="13.0" width="2.8" height="2.8" fill="#2456c7"/><rect x="12.1" y="13.0" width="2.8" height="2.8" fill="#2456c7"/></svg><span style="letter-spacing:0.004px">Conic curve</span></div><div class="mi" style="top:251px"><svg width="16" height="16" viewBox="0 0 16 16"><path d="M.3,7.4 H4.7 M10.3,7.4 H14.9 M7.5,.2 V4.6 M7.5,10.1 V14.7" stroke="#333" stroke-width="1.1"/><rect x="6.0" y="5.9" width="3" height="3" fill="#2456c7"/></svg><span style="letter-spacing:0.21px">Point</span></div><div class="mi" style="top:277px"><svg width="16" height="16" viewBox="0 0 16 16" style="overflow:visible"><text x="7.6" y="16" text-anchor="middle" font-family="Liberation Sans, sans-serif" font-weight="bold" font-size="22" fill="#4a4a4a" textLength="15" lengthAdjust="spacingAndGlyphs">A</text></svg><span style="letter-spacing:-0.35px">Text</span></div><div class="mi" style="top:304px"><svg width="16" height="16" viewBox="0 0 16 16"><path d="M.5,8.4 Q.5,.5 7.8,.5" fill="none" stroke="#4a8af0" stroke-width="1.2"/><path d="M9.2,.5 H15.9 M.5,9.8 V15.9" stroke="#333" stroke-width="1.1"/><path d="M6.4,7.6 H8.8 M7.6,6.4 V8.8" stroke="#222" stroke-width=".9"/></svg><span style="letter-spacing:0.194px">Fillet</span></div><div class="mi" style="top:330px"><svg width="16" height="16" viewBox="0 0 16 16"><path d="M.3,7.4 H3.9" stroke="#333" stroke-width="1.1"/><path d="M3.5,13.5 L8.9,2.4" stroke="#3a7be8" stroke-width="1.2"/><path d="M9.2,7.4 H16" stroke="#3a7be8" stroke-width="1.1" stroke-dasharray="1.6 1.2"/></svg><span style="letter-spacing:0.014px">Trim</span><b style="left:345.5px">T</b></div><div class="mi" style="top:356px"><svg width="16" height="16" viewBox="0 0 16 16"><path d="M.3,7.4 H4.3" stroke="#333" stroke-width="1.1"/><path d="M6,7.4 H8.2" stroke="#3a7be8" stroke-width="1.1"/><path d="M10.4,13.4 L15.9,2.4" stroke="#3a7be8" stroke-width="1.2"/></svg><span style="letter-spacing:-0.06px">Extend</span></div><div class="mi" style="top:382px"><svg width="16" height="16" viewBox="0 0 16 16"><path d="M.3,7.4 H5.7 M10.9,7.4 H15.9" stroke="#b9bcc4" stroke-width="1.1"/><path d="M8.5,3.5 V12.7" stroke="#3a7be8" stroke-width="1.2"/></svg><span style="letter-spacing:0.15px">Break</span></div><div class="mi" style="top:408px"><svg width="16" height="16" viewBox="0 0 16 16"><rect x=".6" y=".6" width="15" height="14.8" rx="1" fill="#9db9e2" stroke="#3a4660" stroke-width="1.1"/><rect x=".9" y="8" width="7.4" height="7.2" fill="url(#gG)" stroke="#333" stroke-width="1"/></svg><span style="letter-spacing:0.018px">Sketch Scale</span></div><div class="mi" style="top:434px"><svg width="16" height="16" viewBox="0 0 32 32"><path d="M31,14.3 H21.1 V9.6 A6.8,6.8 0 0 0 7.5,9.6 V14.3 H6.5 A6.25,6.25 0 0 0 6.5,26.8 H31" fill="none" stroke="#5b9cf5" stroke-width="2"/><path d="M31,17.4 H18.2 V9.6 A3.75,3.75 0 0 0 10.7,9.6 V17.4 H6.5 A3.15,3.15 0 0 0 6.5,23.7 H31" fill="none" stroke="#333" stroke-width="2.2"/></svg><span style="letter-spacing:-0.082px">Offset</span><b style="left:345.5px">O</b></div><div class="mi" style="top:460px"><svg width="16" height="16" viewBox="0 0 16 16"><path d="M7.8,.6 V15.6" stroke="#333" stroke-width="1"/><path d="M1.3,2.6 L3.6,1.4 L6.4,3.2 L6.4,9 L4.9,9.8 L4.2,9.8 L4.2,13.6 L3,14.2 L1.3,14.2Z" fill="url(#gG)" stroke="#333" stroke-width="1" stroke-linejoin="round" /><path d="M14.299999999999999,2.6 L12.0,1.4 L9.2,3.2 L9.2,9 L10.7,9.8 L11.399999999999999,9.8 L11.399999999999999,13.6 L12.6,14.2 L14.299999999999999,14.2Z" fill="url(#gB)" stroke="#1f3d7a" stroke-width="1" stroke-linejoin="round" /></svg><span style="letter-spacing:-0.004px">Mirror</span></div><div class="mi" style="top:486px"><svg width="16" height="16" viewBox="0 0 16 16"><circle cx="7.9" cy="8" r="5.2" fill="none" stroke="#334a7a" stroke-width="1.1"/><rect x="5.9" y=".8" width="3.9" height="3.9" rx=".6" fill="#f4f5f8" stroke="#333" stroke-width="1"/><rect x="0.8" y="6" width="3.9" height="3.9" rx=".6" fill="#a4c3e8" stroke="#1f3d7a" stroke-width="1.1"/><rect x="11.2" y="6" width="3.9" height="3.9" rx=".6" fill="#a4c3e8" stroke="#1f3d7a" stroke-width="1.1"/><rect x="6" y="11.3" width="3.9" height="3.9" rx=".6" fill="#a4c3e8" stroke="#1f3d7a" stroke-width="1.1"/></svg><span style="letter-spacing:0.071px">Circular Pattern</span></div><div class="mi" style="top:512px"><svg width="16" height="16" viewBox="0 0 16 16"><path d="M5.4,2.2 H7.2 M9,2.2 H10.8 M5.4,13.4 H7.2 M9,13.4 H10.8 M2.4,5.4 V7 M2.4,8.6 V10.2" stroke="#333" stroke-width="1.1"/><rect x=".6" y=".4" width="3.7" height="3.7" rx=".6" fill="#f4f5f8" stroke="#333" stroke-width="1"/><rect x="11.8" y="0.4" width="3.7" height="3.7" rx=".6" fill="#b4caea" stroke="#1f3d7a" stroke-width="1.1"/><rect x="0.6" y="11.5" width="3.7" height="3.7" rx=".6" fill="#b4caea" stroke="#1f3d7a" stroke-width="1.1"/><rect x="11.8" y="11.5" width="3.7" height="3.7" rx=".6" fill="#b4caea" stroke="#1f3d7a" stroke-width="1.1"/></svg><span style="letter-spacing:0.099px">Rectangular Pattern</span></div><div class="mi" style="top:536px"><span style="letter-spacing:0.027px">Project / Include</span><u></u></div><div class="mi" style="top:559px"><span style="letter-spacing:0.139px">Mesh</span><u></u></div><div class="mi" style="top:585px"><svg width="16" height="16" viewBox="0 0 16 16"><path d="M.6,.4 V15.8 M15.4,.4 V15.8 M1.2,5.6 H14.8" stroke="#333" stroke-width="1.1" fill="none"/><path d="M1,5.6 L3.6,3.9 L3,5.6 L3.6,7.3Z M15,5.6 L12.4,3.9 L13,5.6 L12.4,7.3Z" fill="#333"/></svg><span style="letter-spacing:0.231px">Sketch Dimension</span><b style="left:345.5px">D</b></div><div class="mi" style="top:612px"><svg width="16" height="16" viewBox="0 0 16 16" style="overflow:visible"><path d="M8.3,0.6 L15,4.4 L7.7,12.2 L0.8,8.3Z" fill="url(#gG)" stroke="#4a4a4a" stroke-width="0.9" stroke-linejoin="round" /><path d="M5.8,3 L12.6,7 M3.3,5.7 L10.2,9.6 M10.5,1.8 L3.1,9.6 M12.8,3.1 L5.4,10.9" stroke="#80838c" stroke-width=".8" fill="none"/><path d="M7.2,11.8 L9.7,14.8 L15.4,9.3" fill="none" stroke="#4da503" stroke-width="2.2"/></svg><span style="letter-spacing:-0.01px">Stop Sketch</span></div><div class="msep" style="top:28px"></div><div class="msep" style="top:299.6px"></div><div class="msep" style="top:580.8px"></div><div class="msep" style="top:608px"></div></div>
<div class="abs" style="left:1700px;top:167.7px;width:220px;height:747px;background:#d2d2d2;border-left:1px solid #9c9c9c;border-top:1px solid #a8a8a8;box-sizing:border-box"><div class="abs" style="left:0;top:0;width:220px;height:24px;background:#d6d6d6;border-bottom:1px solid #b4b4b4;box-sizing:border-box"></div><div class="abs" style="left:5px;top:7.5px;width:9px;height:9px;border-radius:50%;background:#1e1e1e"></div><div class="abs" style="left:7px;top:11.2px;width:5px;height:1.6px;background:#e8e8e8"></div><div class="abs" style="left:26px;top:4.5px;font-size:12px;color:#555;line-height:16px;white-space:nowrap;letter-spacing:-.17px">SKETCH PALETTE</div><div class="abs" style="left:3.4px;top:35.9px;width:0;height:0;border-left:4.9px solid transparent;border-right:4.9px solid transparent;border-top:6.6px solid #2a2a2a"></div><div class="ph" style="top:32.5px;letter-spacing:-0.35px">Options</div><div class="abs" style="left:3.4px;top:335.9px;width:0;height:0;border-left:4.9px solid transparent;border-right:4.9px solid transparent;border-top:6.6px solid #2a2a2a"></div><div class="ph" style="top:332.5px;letter-spacing:-0.161px">Constraints</div><div class="pl" style="top:62.5px;letter-spacing:0.14px">Construction</div><div class="abs" style="left:123.8px;top:59.5px"><svg width="22" height="20" viewBox="0 0 22 20" style="overflow:visible"><path d="M19,4 L4.7,9.5 L19,14.7" fill="none" stroke="#3a3a3a" stroke-width="1.1"/><path d="M7.2,9.5 H20.2" stroke="#f58a0a" stroke-width="1.2" stroke-dasharray="2.4 1.2"/><path d="M14,2.2 Q20.4,9.5 14,16.8" fill="none" stroke="#f58a0a" stroke-width="1.2" stroke-dasharray="2 1.4"/></svg></div><div class="pl" style="top:92.5px;letter-spacing:-0.076px">Look At</div><div class="abs" style="left:123.8px;top:89.5px"><svg width="22" height="20" viewBox="0 0 22 20" style="overflow:visible"><path d="M5.2,7 L9.2,2.4000000000000004 L9.8,4.5 L13.600000000000001,3.8 L16.0,2.8 L16.4,7" fill="#c8c8cc" stroke="#5a5f6a" stroke-width=".9" stroke-linejoin="round"/><rect x="4.2" y="7" width="15.600000000000001" height="10.7" rx=".8" fill="#fff" stroke="#3a4050" stroke-width="1.2"/><rect x="7.2" y="10.3" width="9.600000000000001" height="4.199999999999999" fill="#aeb4c6" stroke="#2a3040" stroke-width="1.1"/></svg></div><div class="pl" style="top:122.5px;letter-spacing:0.01px">Sketch Grid</div><div class="cb" style="top:121.8px"></div><svg class="abs" style="left:126.2px;top:121.8px" width="14" height="14"><path d="M2.6,8.5 L5.3,11 L11.7,2.8" fill="none" stroke="#111" stroke-width="1.8"/></svg><div class="pl" style="top:152.5px;letter-spacing:0.069px">Snap</div><div class="cb" style="top:151.8px"></div><div class="pl" style="top:182.5px;letter-spacing:0.038px">Slice</div><div class="cb" style="top:181.8px"></div><div class="pl" style="top:212.5px;letter-spacing:0.07px">Show Profile</div><div class="cb" style="top:211.8px"></div><svg class="abs" style="left:126.2px;top:211.8px" width="14" height="14"><path d="M2.6,8.5 L5.3,11 L11.7,2.8" fill="none" stroke="#111" stroke-width="1.8"/></svg><div class="pl" style="top:242.5px;letter-spacing:0.136px">Show Points</div><div class="cb" style="top:241.8px"></div><svg class="abs" style="left:126.2px;top:241.8px" width="14" height="14"><path d="M2.6,8.5 L5.3,11 L11.7,2.8" fill="none" stroke="#111" stroke-width="1.8"/></svg><div class="pl" style="top:272.5px;letter-spacing:0.179px">Show Constraints</div><div class="cb" style="top:271.8px"></div><svg class="abs" style="left:126.2px;top:271.8px" width="14" height="14"><path d="M2.6,8.5 L5.3,11 L11.7,2.8" fill="none" stroke="#111" stroke-width="1.8"/></svg><div class="pl" style="top:302.5px;letter-spacing:-0.007px">3D Sketch</div><div class="cb" style="top:301.8px"></div><svg class="abs" style="left:126.2px;top:301.8px" width="14" height="14"><path d="M2.6,8.5 L5.3,11 L11.7,2.8" fill="none" stroke="#111" stroke-width="1.8"/></svg><div class="pl" style="top:362.5px;letter-spacing:0.31px">Coincident</div><div class="abs" style="left:123.8px;top:359.5px"><svg width="22" height="20" viewBox="0 0 22 20" style="overflow:visible"><path d="M7.2,4.6 V14.6 M7.2,16.6 H18.8" fill="none" stroke="#333" stroke-width="1"/><path d="M5.9,12.6 L7.2,15 L8.5,12.6Z" fill="#333" stroke="#333" stroke-width=".6"/><rect x="6.2" y="1.9" width="2" height="2" fill="#e81010"/><rect x="6.2" y="15.6" width="2" height="2" fill="#e81010"/></svg></div><div class="pl" style="top:392.5px;letter-spacing:0.272px">Collinear</div><div class="abs" style="left:123.8px;top:389.5px"><svg width="22" height="20" viewBox="0 0 22 20" style="overflow:visible"><path d="M7,17.5 L14.5,10.2" stroke="#333" stroke-width="1.1"/><path d="M14.5,10.2 L20,4.9" stroke="#d0501a" stroke-width="1.2"/><path d="M4.1,9.6 L9.6,5.3 M7.6,8 L11,11.6 M8.6,11.4 L11,11.6 L10.9,9.2" fill="none" stroke="#222" stroke-width="1"/></svg></div><div class="pl" style="top:422.5px;letter-spacing:0.244px">Concentric</div><div class="abs" style="left:123.8px;top:419.5px"><svg width="22" height="20" viewBox="0 0 22 20" style="overflow:visible"><circle cx="12" cy="9.7" r="7.4" fill="none" stroke="#e03838" stroke-width="1.3"/><circle cx="12" cy="9.7" r="4.4" fill="none" stroke="#3f4350" stroke-width="1.5"/></svg></div><div class="pl" style="top:452.5px;letter-spacing:0.218px">Midpoint</div><div class="abs" style="left:123.8px;top:449.5px"><svg width="22" height="20" viewBox="0 0 22 20" style="overflow:visible"><path d="M12,4.4 L5.4,16.5 H18.7Z" fill="none" stroke="#e02020" stroke-width="1.15" stroke-linejoin="miter"/><circle cx="12" cy="4.3" r=".8" fill="#e02020"/></svg></div><div class="pl" style="top:482.5px;letter-spacing:-0.096px">Fix/UnFix</div><div class="abs" style="left:123.8px;top:479.5px"><svg width="22" height="20" viewBox="0 0 22 20" style="overflow:visible"><path d="M8.2,8.4 V6.6 A3.2,3.2 0 0 1 14.6,6.6 V8.4" fill="none" stroke="#c8501c" stroke-width="1.7"/><rect x="6.3" y="8.3" width="10.2" height="7.7" rx="1.2" fill="#f8c8ac" stroke="#c8501c" stroke-width="1.3"/><path d="M11.4,10.4 V13.8" stroke="#c8501c" stroke-width="1.2"/><path d="M7,11 H15.8" stroke="#fbe3d6" stroke-width="1"/></svg></div><div class="pl" style="top:512.5px;letter-spacing:0.21px">Parallel</div><div class="abs" style="left:123.8px;top:509.5px"><svg width="22" height="20" viewBox="0 0 22 20" style="overflow:visible"><path d="M5,13.2 L15.9,3" stroke="#3a3f4a" stroke-width="1.1"/><path d="M8.2,16.7 L18.8,6.3" stroke="#d0501a" stroke-width="1.2"/></svg></div><div class="pl" style="top:542.5px;letter-spacing:0.227px">Perpendicular</div><div class="abs" style="left:123.8px;top:539.5px"><svg width="22" height="20" viewBox="0 0 22 20" style="overflow:visible"><path d="M18.8,2.9 L9.6,13.3" stroke="#3a3f4a" stroke-width="1.1"/><path d="M5.1,10.1 L12,16.6" stroke="#d0501a" stroke-width="1.2"/></svg></div><div class="pl" style="top:572.5px;letter-spacing:0.01px">Horizontal/Vertical</div><div class="abs" style="left:123.8px;top:569.5px"><svg width="22" height="20" viewBox="0 0 22 20" style="overflow:visible"><path d="M11.9,3.3 V13.2 M13.5,3.3 V13.2 M7.2,13.2 H16" stroke="#2a2f3a" stroke-width="1.1"/><path d="M7.4,15.2 H16" stroke="#e02020" stroke-width="1.1"/><path d="M8.2,17.6 L9.8,15.4 M10.6,17.6 L12.2,15.4 M13,17.6 L14.6,15.4 M15.2,17.6 L16.4,15.8 M8.6,4 L10.8,5.8 M8.6,6.6 L10.8,8.4 M8.6,9.2 L10.8,11" stroke="#e02020" stroke-width=".9"/></svg></div><div class="pl" style="top:602.5px;letter-spacing:0.043px">Tangent</div><div class="abs" style="left:123.8px;top:599.5px"><svg width="22" height="20" viewBox="0 0 22 20" style="overflow:visible"><circle cx="10" cy="11.7" r="4.7" fill="none" stroke="#c8501c" stroke-width="1.3"/><path d="M9,2.9 L18.8,12.7" stroke="#333" stroke-width="1.1"/></svg></div><div class="pl" style="top:632.5px;letter-spacing:0.035px">Curvature</div><div class="abs" style="left:123.8px;top:629.5px"><svg width="22" height="20" viewBox="0 0 22 20" style="overflow:visible"><path d="M4.2,5.8 Q8,5.4 11.6,7" fill="none" stroke="#111" stroke-width="1.5"/><path d="M14.6,10 Q15.8,13 15.9,17.4" fill="none" stroke="#111" stroke-width="1.5"/><path d="M8.4,2.2 L19.6,12.4" stroke="#e01010" stroke-width="1.6" stroke-dasharray="2.2 1.2"/><path d="M8.4,2.2 L19.6,12.4" stroke="#fff" stroke-width=".5" stroke-dasharray="1.2 2.2" stroke-dashoffset="-2.2"/><rect x="12.1" y="5.6" width="3.6" height="3.6" fill="#e81010"/></svg></div><div class="pl" style="top:662.5px;letter-spacing:0.202px">Equal</div><div class="abs" style="left:123.8px;top:659.5px"><svg width="22" height="20" viewBox="0 0 22 20" style="overflow:visible"><path d="M6,8.4 H18 M6,12.3 H18" stroke="#e02020" stroke-width="1.3"/></svg></div><div class="pl" style="top:692.5px;letter-spacing:0.037px">Symmetry</div><div class="abs" style="left:123.8px;top:689.5px"><svg width="22" height="20" viewBox="0 0 22 20" style="overflow:visible"><path d="M7.8,5.4 H5.4 V14.2 H7.8" fill="none" stroke="#e02020" stroke-width="1.2"/><path d="M15.4,5.4 H17.8 V14.2 H15.4" fill="none" stroke="#3a3f50" stroke-width="1.2"/><path d="M11.6,2.9 V16.7" stroke="#e02020" stroke-width="1.2" stroke-dasharray="5.2 1.2 1.4 1.2"/></svg></div><div class="abs" style="left:0;top:729.5px;width:220px;height:1.3px;background:#a2a2a2"></div><div class="abs" style="left:148.5px;top:738.5px;width:80px;height:10px;background:#e6e6e6;border:1px solid #bdbdbd"></div></div>
<svg class="abs" style="left:1815px;top:78px" width="100" height="92" viewBox="1815 78 100 92"><rect x="1831.4" y="105.5" width="51" height="52" fill="#b4b4b4" fill-opacity=".55" stroke="#a9a9a9" stroke-width="1"/><rect x="1840.1" y="115.5" width="32.7" height="32.5" fill="#bcbcc0" fill-opacity=".5"/><text transform="translate(1880.5,125.9) rotate(180)" font-family="Liberation Sans, sans-serif" font-weight="bold" font-size="14.9" fill="#8c8c8f" textLength="47.8" lengthAdjust="spacingAndGlyphs">BOTTOM</text><line x1="1830.3" y1="97" x2="1830.3" y2="159.6" stroke="#4f4fe8" stroke-width="1.8"/><line x1="1829.4" y1="158.9" x2="1892.2" y2="158.9" stroke="#f06060" stroke-width="1.8"/><text x="1825.6" y="93.5" font-family="Liberation Sans, sans-serif" font-size="14" fill="#6a6af0" textLength="8" lengthAdjust="spacingAndGlyphs">Z</text><text x="1895.6" y="163.9" font-family="Liberation Sans, sans-serif" font-size="14.6" fill="#f07070" textLength="7.4" lengthAdjust="spacingAndGlyphs">X</text></svg>
<div class="abs" style="left:4px;top:885px;width:300px;height:25px;background:#d0d0d0;border:1px solid #adadad;box-sizing:border-box"></div><div class="abs" style="left:31px;top:891px;font-size:12px;color:#555;line-height:15px;letter-spacing:-.2px">COMMENTS</div><svg class="abs" style="left:281px;top:891px" width="24" height="13"><circle cx="6.3" cy="6.5" r="4.7" fill="#1e1e1e"/><path d="M3.6,6.5 H9 M6.3,3.8 V9.2" stroke="#fff" stroke-width="1.5"/><path d="M18.5,1.5 V11.5" stroke="#555" stroke-width="1.2"/><path d="M20.3,3 V10.5" stroke="#999" stroke-width="1"/></svg>
<div class="abs" style="left:828px;top:883px;width:146px;height:27px;background:#c9c9c9"></div><div class="abs" style="left:981px;top:883px;width:111px;height:27px;background:#c9c9c9"></div><svg class="abs" style="left:826px;top:882px" width="270" height="30" viewBox="826 882 270 30"><ellipse cx="839.6" cy="895.8" rx="3.3" ry="7.8" fill="none" stroke="#3f4450" stroke-width="1.1"/><path d="M836,893.2 Q832,893.2 832.2,895.6 Q832.4,897.4 835,898 M839.5,898.6 Q847.6,898.4 847.6,895.4 Q847.4,892.6 843.4,892.8" fill="none" stroke="#3f4450" stroke-width="1.1"/><path d="M840.6,891.2 h2.4 M841.8,890 v2.4 M843.6,893.6 h2.4 M844.8,892.4 v2.4" stroke="#222" stroke-width=".9"/><path d="M839.6,893.8 l.9,1 1.1,.6 -1.1,.6 -.9,1 -.9,-1 -1.1,-.6 1.1,-.6Z" fill="#1d7ff0"/><path d="M854.1,894.3 H860.1 L857.1,897.6999999999999Z" fill="#222"/><path d="M868.5,893.3 L872.5,888.6999999999999 L873.1,890.8 L876.9,890.0999999999999 L879.3,889.0999999999999 L879.7,893.3" fill="#c8c8cc" stroke="#5a5f6a" stroke-width=".9" stroke-linejoin="round"/><rect x="867.5" y="893.3" width="15.0" height="10.0" rx=".8" fill="#fff" stroke="#3a4050" stroke-width="1.2"/><rect x="870.5" y="896.5999999999999" width="9.0" height="3.5" fill="#aeb4c6" stroke="#2a3040" stroke-width="1.1"/><path d="M895.6,896.2 L893.2,894.8 Q892.2,895.4 893.2,896.8 L897.4,902.4 Q898.6,903.8 900.6,903.8 H903 Q905.4,903.6 905.8,901.2 L907.6,893.8 Q907.4,892.4 906.2,893 L904.8,896.6 L905.2,890.8 Q904.4,889.6 903.4,890.6 L902.8,895.6 L902.2,889.4 Q901.2,888.2 900.2,889.4 L900.2,895.6 L898.6,890.6 Q897.4,889.8 896.8,891 L898,898.6Z" fill="#f6f6f8" stroke="#2a2d35" stroke-width="1" stroke-linejoin="round"/><path d="M925,898.4 L928.9,902" stroke="#2f3340" stroke-width="2.4" stroke-linecap="round"/><circle cx="921.8" cy="895" r="4.4" fill="#e8f1f4" stroke="#3f4450" stroke-width="1.2"/><path d="M928,890.2 h4.6 M930.3,888 v4.4 M928,894.5 h4.6" stroke="#222" stroke-width="1"/><rect x="942.3" y="888.5" width="15" height="15" fill="none" stroke="#333" stroke-width="1" stroke-dasharray="2.2 1.6"/><path d="M952.6,898.6 L957,902.6" stroke="#2f3340" stroke-width="2.6" stroke-linecap="round"/><circle cx="948.4" cy="894.3" r="6.1" fill="#e4eeef" stroke="#2a2d35" stroke-width="1.3"/><path d="M963.9,894.3 H969.9 L966.9,897.6999999999999Z" fill="#222"/><rect x="985.3" y="888.2" width="15.4" height="12.4" rx="1.2" fill="#fafafa" stroke="#2a2d35" stroke-width="1.1"/><rect x="987.4" y="890.4" width="11.2" height="8" rx="1" fill="url(#gB)" stroke="#24417a" stroke-width="1.3"/><path d="M990.6,900.8 L989.6,903 Q989.4,903.7 990.4,903.7 H996 Q996.9,903.7 996.7,903 L995.6,900.8Z" fill="#fafafa" stroke="#2a2d35" stroke-width=".9"/><path d="M1004.0,894.3 H1010.0 L1007,897.6999999999999Z" fill="#222"/><defs><linearGradient id="gGr" x1="0" y1="0" x2="0" y2="1"><stop offset="0" stop-color="#4a4c52"/><stop offset="1" stop-color="#8a8fa0"/></linearGradient></defs><rect x="1022.3" y="888.2" width="15.4" height="15.5" rx="1.2" fill="url(#gGr)" stroke="#2a2a2e" stroke-width="1"/><rect x="1023.30" y="889.20" width="1.9" height="1.9" fill="#fff" opacity="1.00"/><rect x="1023.30" y="892.15" width="1.9" height="1.9" fill="#fff" opacity="0.93"/><rect x="1023.30" y="895.10" width="1.9" height="1.9" fill="#fff" opacity="0.86"/><rect x="1023.30" y="898.05" width="1.9" height="1.9" fill="#fff" opacity="0.79"/><rect x="1023.30" y="901.00" width="1.9" height="1.9" fill="#fff" opacity="0.72"/><rect x="1026.25" y="889.20" width="1.9" height="1.9" fill="#fff" opacity="1.00"/><rect x="1026.25" y="892.15" width="1.9" height="1.9" fill="#fff" opacity="0.93"/><rect x="1026.25" y="895.10" width="1.9" height="1.9" fill="#fff" opacity="0.86"/><rect x="1026.25" y="898.05" width="1.9" height="1.9" fill="#fff" opacity="0.79"/><rect x="1026.25" y="901.00" width="1.9" height="1.9" fill="#fff" opacity="0.72"/><rect x="1029.20" y="889.20" width="1.9" height="1.9" fill="#fff" opacity="1.00"/><rect x="1029.20" y="892.15" width="1.9" height="1.9" fill="#fff" opacity="0.93"/><rect x="1029.20" y="895.10" width="1.9" height="1.9" fill="#fff" opacity="0.86"/><rect x="1029.20" y="898.05" width="1.9" height="1.9" fill="#fff" opacity="0.79"/><rect x="1029.20" y="901.00" width="1.9" height="1.9" fill="#fff" opacity="0.72"/><rect x="1032.15" y="889.20" width="1.9" height="1.9" fill="#fff" opacity="1.00"/><rect x="1032.15" y="892.15" width="1.9" height="1.9" fill="#fff" opacity="0.93"/><rect x="1032.15" y="895.10" width="1.9" height="1.9" fill="#fff" opacity="0.86"/><rect x="1032.15" y="898.05" width="1.9" height="1.9" fill="#fff" opacity="0.79"/><rect x="1032.15" y="901.00" width="1.9" height="1.9" fill="#fff" opacity="0.72"/><rect x="1035.10" y="889.20" width="1.9" height="1.9" fill="#fff" opacity="1.00"/><rect x="1035.10" y="892.15" width="1.9" height="1.9" fill="#fff" opacity="0.93"/><rect x="1035.10" y="895.10" width="1.9" height="1.9" fill="#fff" opacity="0.86"/><rect x="1035.10" y="898.05" width="1.9" height="1.9" fill="#fff" opacity="0.79"/><rect x="1035.10" y="901.00" width="1.9" height="1.9" fill="#fff" opacity="0.72"/><path d="M1040.9,894.3 H1046.9 L1043.9,897.6999999999999Z" fill="#222"/><rect x="1059.6" y="889.6" width="6.6" height="5.6" rx="1" fill="#b9d0ee" stroke="#24417a" stroke-width="1.3"/><rect x="1061.5" y="891.3000000000001" width="2.8" height="2.2" fill="#8fb0dc"/><rect x="1066.9" y="889.6" width="6.6" height="5.6" rx="1" fill="#b9d0ee" stroke="#24417a" stroke-width="1.3"/><rect x="1068.8000000000002" y="891.3000000000001" width="2.8" height="2.2" fill="#8fb0dc"/><rect x="1059.6" y="896" width="6.6" height="5.6" rx="1" fill="#b9d0ee" stroke="#24417a" stroke-width="1.3"/><rect x="1061.5" y="897.7" width="2.8" height="2.2" fill="#8fb0dc"/><rect x="1066.9" y="896" width="6.6" height="5.6" rx="1" fill="#b9d0ee" stroke="#24417a" stroke-width="1.3"/><rect x="1068.8000000000002" y="897.7" width="2.8" height="2.2" fill="#8fb0dc"/><path d="M1077.8,894.3 H1083.8 L1080.8,897.6999999999999Z" fill="#222"/></svg>
<svg class="abs" style="left:110px;top:250px" width="370" height="70" viewBox="110 250 370 70"><defs><filter id="sh" x="-10%" y="-30%" width="120%" height="160%"><feGaussianBlur in="SourceAlpha" stdDeviation="1.6"/><feOffset dx="1.5" dy="2"/><feComponentTransfer><feFuncA type="linear" slope=".5"/></feComponentTransfer><feMerge><feMergeNode/><feMergeNode in="SourceGraphic"/></feMerge></filter></defs><g filter="url(#sh)"><rect x="122.8" y="262.8" width="205.5" height="38.3" fill="none" stroke="#f5444c" stroke-width="3"/><path d="M350.3,288 L380,273 L380,302.6Z" fill="#f5444c"/><rect x="387.3" y="282.8" width="29.8" height="10.6" fill="#f5444c"/><path d="M427,283.2 H452 A5.2,5.2 0 0 1 452,293.6 H427Z" fill="#f5444c"/></g></svg>
</body></html>
